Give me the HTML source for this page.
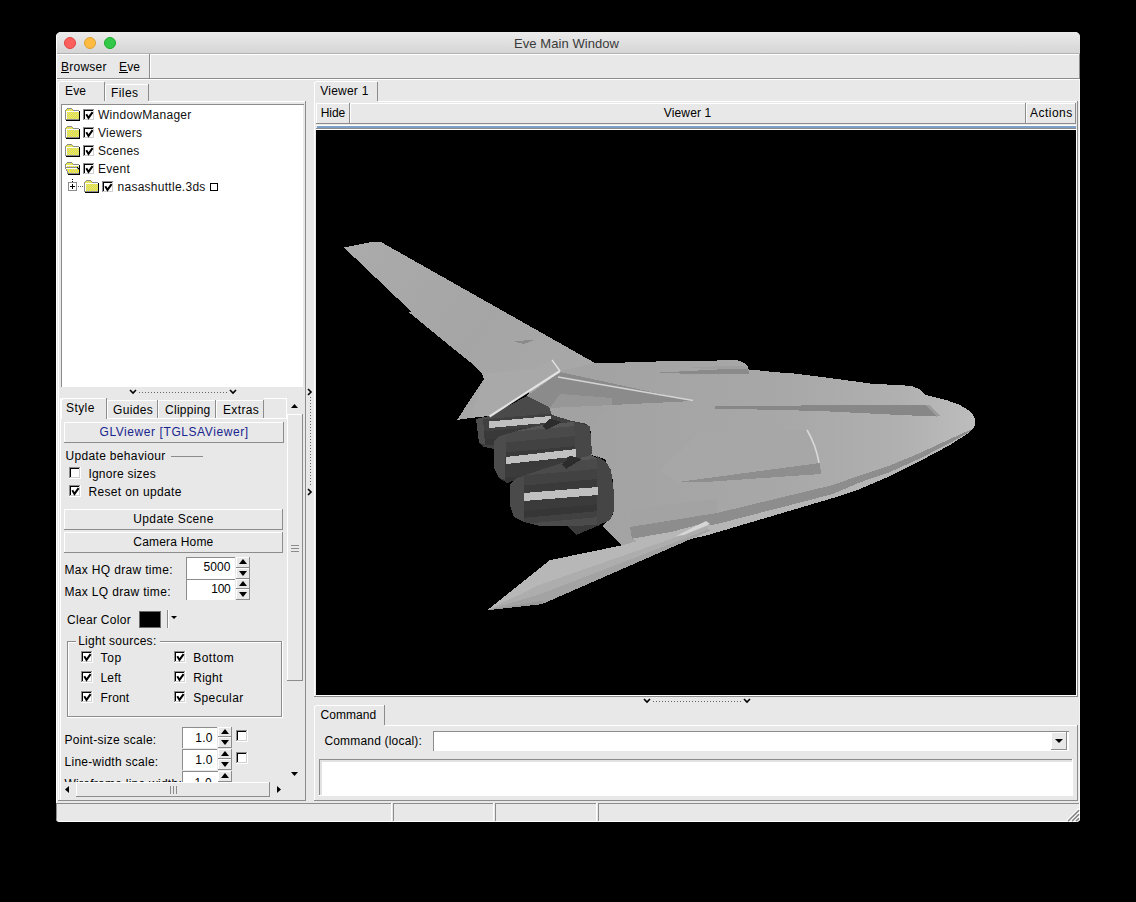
<!DOCTYPE html>
<html><head><meta charset="utf-8"><style>
html,body{margin:0;padding:0;background:#000;width:1136px;height:902px;overflow:hidden}
div,svg{position:absolute;box-sizing:border-box}
.t{font-family:"Liberation Sans",sans-serif;white-space:pre;color:#000}
#win{left:0;top:0;width:1136px;height:902px;clip-path:inset(32px 56px 80px 56px round 5px 5px 4px 4px)}
</style></head><body>
<div id="win"><div style="left:56px;top:32px;width:1024px;height:790px;background:#e8e8e8;"></div><div style="left:56px;top:32px;width:1024px;height:21px;background:linear-gradient(#ebebeb,#d5d5d5);"></div><div style="left:56px;top:53px;width:1024px;height:1px;background:#b2b2b2;"></div><div style="left:64px;top:37px;width:12px;height:12px;border-radius:50%;background:#fc605c;border:0.7px solid #e0443e"></div><div style="left:84px;top:37px;width:12px;height:12px;border-radius:50%;background:#fdbc40;border:0.7px solid #dea034"></div><div style="left:104px;top:37px;width:12px;height:12px;border-radius:50%;background:#34c84a;border:0.7px solid #1aab29"></div><div class="t" style="left:514px;top:37px;font-size:13px;line-height:13px;color:#3a3a3a;letter-spacing:0.067px;">Eve Main Window</div><div style="left:56px;top:54px;width:1024px;height:1px;background:#ffffff;"></div><div style="left:56px;top:78px;width:1024px;height:1px;background:#8c8c8c;"></div><div style="left:149px;top:54px;width:1px;height:24px;background:#8c8c8c;"></div><div style="left:150px;top:54px;width:1px;height:24px;background:#ffffff;"></div><div class="t" style="left:61px;top:61px;font-size:12px;line-height:12px;color:#000;letter-spacing:0.247px;">Browser</div><div style="left:61px;top:72px;width:8px;height:1px;background:#000;"></div><div class="t" style="left:119px;top:61px;font-size:12px;line-height:12px;color:#000;letter-spacing:0.164px;">Eve</div><div style="left:119px;top:72px;width:9px;height:1px;background:#000;"></div><div style="left:56px;top:32px;width:1px;height:790px;background:#ffffff;"></div><div style="left:56px;top:79px;width:1024px;height:1px;background:#ffffff;"></div><div style="left:1079px;top:79px;width:1px;height:743px;background:#f4f4f4;"></div><div style="left:1079px;top:54px;width:1px;height:25px;background:#8c8c8c;"></div><div style="left:58px;top:82px;width:1px;height:719px;background:#ffffff;"></div><div style="left:148px;top:101px;width:158px;height:1px;background:#ffffff;"></div><div style="left:305px;top:101px;width:1px;height:700px;background:#8c8c8c;"></div><div style="left:60px;top:81px;width:44px;height:1px;background:#ffffff;"></div><div style="left:58px;top:83px;width:1px;height:18px;background:#ffffff;"></div><div style="left:59px;top:82px;width:1px;height:1px;background:#ffffff;"></div><div style="left:104px;top:82px;width:1px;height:19px;background:#8c8c8c;"></div><div class="t" style="left:65px;top:85px;font-size:12px;line-height:12px;color:#000;letter-spacing:0.164px;">Eve</div><div style="left:106px;top:84px;width:42px;height:1px;background:#ffffff;"></div><div style="left:105px;top:85px;width:1px;height:16px;background:#ffffff;"></div><div style="left:148px;top:84px;width:1px;height:17px;background:#8c8c8c;"></div><div class="t" style="left:111px;top:87px;font-size:12px;line-height:12px;color:#000;letter-spacing:0.414px;">Files</div><div style="left:62px;top:105px;width:241px;height:282px;background:#fff;"></div><div style="left:61px;top:104px;width:243px;height:1px;background:#8c8c8c;"></div><div style="left:61px;top:104px;width:1px;height:283px;background:#8c8c8c;"></div><svg style="left:65px;top:108px" width="16" height="13" viewBox="0 0 16 13" shape-rendering="crispEdges"><rect x="2" y="0" width="5" height="1" fill="#8c8c8c"/><rect x="1" y="1" width="1" height="1" fill="#8c8c8c"/><rect x="2" y="1" width="1" height="1" fill="#ffff00"/><rect x="3" y="1" width="1" height="1" fill="#c8c8b8"/><rect x="4" y="1" width="1" height="1" fill="#ffff00"/><rect x="5" y="1" width="1" height="1" fill="#c8c8b8"/><rect x="6" y="1" width="1" height="1" fill="#ffff00"/><rect x="7" y="1" width="1" height="1" fill="#8c8c8c"/><rect x="0" y="2" width="1" height="1" fill="#8c8c8c"/><rect x="1" y="2" width="1" height="1" fill="#ffff00"/><rect x="2" y="2" width="1" height="1" fill="#c8c8b8"/><rect x="3" y="2" width="1" height="1" fill="#ffff00"/><rect x="4" y="2" width="1" height="1" fill="#c8c8b8"/><rect x="5" y="2" width="1" height="1" fill="#ffff00"/><rect x="6" y="2" width="1" height="1" fill="#c8c8b8"/><rect x="7" y="2" width="1" height="1" fill="#ffff00"/><rect x="8" y="2" width="6" height="1" fill="#8c8c8c"/><rect x="0" y="3" width="1" height="1" fill="#8c8c8c"/><rect x="1" y="3" width="13" height="1" fill="#ffffff"/><rect x="14" y="3" width="1" height="1" fill="#000000"/><rect x="0" y="4" width="1" height="1" fill="#8c8c8c"/><rect x="1" y="4" width="1" height="1" fill="#ffffff"/><rect x="2" y="4" width="1" height="1" fill="#ffff00"/><rect x="3" y="4" width="1" height="1" fill="#c8c8b8"/><rect x="4" y="4" width="1" height="1" fill="#ffff00"/><rect x="5" y="4" width="1" height="1" fill="#c8c8b8"/><rect x="6" y="4" width="1" height="1" fill="#ffff00"/><rect x="7" y="4" width="1" height="1" fill="#c8c8b8"/><rect x="8" y="4" width="1" height="1" fill="#ffff00"/><rect x="9" y="4" width="1" height="1" fill="#c8c8b8"/><rect x="10" y="4" width="1" height="1" fill="#ffff00"/><rect x="11" y="4" width="1" height="1" fill="#c8c8b8"/><rect x="12" y="4" width="1" height="1" fill="#ffff00"/><rect x="13" y="4" width="1" height="1" fill="#c8c8b8"/><rect x="14" y="4" width="1" height="1" fill="#000000"/><rect x="0" y="5" width="1" height="1" fill="#8c8c8c"/><rect x="1" y="5" width="1" height="1" fill="#ffffff"/><rect x="2" y="5" width="1" height="1" fill="#c8c8b8"/><rect x="3" y="5" width="1" height="1" fill="#ffff00"/><rect x="4" y="5" width="1" height="1" fill="#c8c8b8"/><rect x="5" y="5" width="1" height="1" fill="#ffff00"/><rect x="6" y="5" width="1" height="1" fill="#c8c8b8"/><rect x="7" y="5" width="1" height="1" fill="#ffff00"/><rect x="8" y="5" width="1" height="1" fill="#c8c8b8"/><rect x="9" y="5" width="1" height="1" fill="#ffff00"/><rect x="10" y="5" width="1" height="1" fill="#c8c8b8"/><rect x="11" y="5" width="1" height="1" fill="#ffff00"/><rect x="12" y="5" width="1" height="1" fill="#c8c8b8"/><rect x="13" y="5" width="1" height="1" fill="#ffff00"/><rect x="14" y="5" width="1" height="1" fill="#000000"/><rect x="0" y="6" width="1" height="1" fill="#8c8c8c"/><rect x="1" y="6" width="1" height="1" fill="#ffffff"/><rect x="2" y="6" width="1" height="1" fill="#ffff00"/><rect x="3" y="6" width="1" height="1" fill="#c8c8b8"/><rect x="4" y="6" width="1" height="1" fill="#ffff00"/><rect x="5" y="6" width="1" height="1" fill="#c8c8b8"/><rect x="6" y="6" width="1" height="1" fill="#ffff00"/><rect x="7" y="6" width="1" height="1" fill="#c8c8b8"/><rect x="8" y="6" width="1" height="1" fill="#ffff00"/><rect x="9" y="6" width="1" height="1" fill="#c8c8b8"/><rect x="10" y="6" width="1" height="1" fill="#ffff00"/><rect x="11" y="6" width="1" height="1" fill="#c8c8b8"/><rect x="12" y="6" width="1" height="1" fill="#ffff00"/><rect x="13" y="6" width="1" height="1" fill="#c8c8b8"/><rect x="14" y="6" width="1" height="1" fill="#000000"/><rect x="0" y="7" width="1" height="1" fill="#8c8c8c"/><rect x="1" y="7" width="1" height="1" fill="#ffffff"/><rect x="2" y="7" width="1" height="1" fill="#c8c8b8"/><rect x="3" y="7" width="1" height="1" fill="#ffff00"/><rect x="4" y="7" width="1" height="1" fill="#c8c8b8"/><rect x="5" y="7" width="1" height="1" fill="#ffff00"/><rect x="6" y="7" width="1" height="1" fill="#c8c8b8"/><rect x="7" y="7" width="1" height="1" fill="#ffff00"/><rect x="8" y="7" width="1" height="1" fill="#c8c8b8"/><rect x="9" y="7" width="1" height="1" fill="#ffff00"/><rect x="10" y="7" width="1" height="1" fill="#c8c8b8"/><rect x="11" y="7" width="1" height="1" fill="#ffff00"/><rect x="12" y="7" width="1" height="1" fill="#c8c8b8"/><rect x="13" y="7" width="1" height="1" fill="#ffff00"/><rect x="14" y="7" width="1" height="1" fill="#000000"/><rect x="0" y="8" width="1" height="1" fill="#8c8c8c"/><rect x="1" y="8" width="1" height="1" fill="#ffffff"/><rect x="2" y="8" width="1" height="1" fill="#ffff00"/><rect x="3" y="8" width="1" height="1" fill="#c8c8b8"/><rect x="4" y="8" width="1" height="1" fill="#ffff00"/><rect x="5" y="8" width="1" height="1" fill="#c8c8b8"/><rect x="6" y="8" width="1" height="1" fill="#ffff00"/><rect x="7" y="8" width="1" height="1" fill="#c8c8b8"/><rect x="8" y="8" width="1" height="1" fill="#ffff00"/><rect x="9" y="8" width="1" height="1" fill="#c8c8b8"/><rect x="10" y="8" width="1" height="1" fill="#ffff00"/><rect x="11" y="8" width="1" height="1" fill="#c8c8b8"/><rect x="12" y="8" width="1" height="1" fill="#ffff00"/><rect x="13" y="8" width="1" height="1" fill="#c8c8b8"/><rect x="14" y="8" width="1" height="1" fill="#000000"/><rect x="0" y="9" width="1" height="1" fill="#8c8c8c"/><rect x="1" y="9" width="1" height="1" fill="#ffffff"/><rect x="2" y="9" width="1" height="1" fill="#c8c8b8"/><rect x="3" y="9" width="1" height="1" fill="#ffff00"/><rect x="4" y="9" width="1" height="1" fill="#c8c8b8"/><rect x="5" y="9" width="1" height="1" fill="#ffff00"/><rect x="6" y="9" width="1" height="1" fill="#c8c8b8"/><rect x="7" y="9" width="1" height="1" fill="#ffff00"/><rect x="8" y="9" width="1" height="1" fill="#c8c8b8"/><rect x="9" y="9" width="1" height="1" fill="#ffff00"/><rect x="10" y="9" width="1" height="1" fill="#c8c8b8"/><rect x="11" y="9" width="1" height="1" fill="#ffff00"/><rect x="12" y="9" width="1" height="1" fill="#c8c8b8"/><rect x="13" y="9" width="1" height="1" fill="#ffff00"/><rect x="14" y="9" width="1" height="1" fill="#000000"/><rect x="0" y="10" width="1" height="1" fill="#8c8c8c"/><rect x="1" y="10" width="1" height="1" fill="#ffffff"/><rect x="2" y="10" width="1" height="1" fill="#ffff00"/><rect x="3" y="10" width="1" height="1" fill="#c8c8b8"/><rect x="4" y="10" width="1" height="1" fill="#ffff00"/><rect x="5" y="10" width="1" height="1" fill="#c8c8b8"/><rect x="6" y="10" width="1" height="1" fill="#ffff00"/><rect x="7" y="10" width="1" height="1" fill="#c8c8b8"/><rect x="8" y="10" width="1" height="1" fill="#ffff00"/><rect x="9" y="10" width="1" height="1" fill="#c8c8b8"/><rect x="10" y="10" width="1" height="1" fill="#ffff00"/><rect x="11" y="10" width="1" height="1" fill="#c8c8b8"/><rect x="12" y="10" width="1" height="1" fill="#ffff00"/><rect x="13" y="10" width="1" height="1" fill="#c8c8b8"/><rect x="14" y="10" width="1" height="1" fill="#000000"/><rect x="0" y="11" width="14" height="1" fill="#8c8c8c"/><rect x="14" y="11" width="1" height="1" fill="#000000"/><rect x="1" y="12" width="14" height="1" fill="#000000"/></svg><div style="left:83px;top:109px;width:12px;height:12px;background:#fff;"></div><div style="left:83px;top:109px;width:12px;height:1px;background:#8c8c8c;"></div><div style="left:83px;top:109px;width:1px;height:12px;background:#8c8c8c;"></div><div style="left:84px;top:110px;width:10px;height:1px;background:#000;"></div><div style="left:84px;top:110px;width:1px;height:10px;background:#000;"></div><div style="left:84px;top:119px;width:10px;height:1px;background:#d0d0d0;"></div><div style="left:93px;top:110px;width:1px;height:10px;background:#d0d0d0;"></div><div style="left:83px;top:120px;width:12px;height:1px;background:#ffffff;"></div><div style="left:94px;top:109px;width:1px;height:12px;background:#ffffff;"></div><svg style="left:83px;top:109px" width="12" height="12" viewBox="0 0 12 12"><path d="M3.3 5.3 L5.5 8.9 L9.6 3.2" stroke="#000" stroke-width="2.0" fill="none" stroke-linecap="butt" stroke-linejoin="miter"/></svg><div class="t" style="left:98px;top:109px;font-size:12px;line-height:12px;color:#111;letter-spacing:0.271px;">WindowManager</div><svg style="left:65px;top:126px" width="16" height="13" viewBox="0 0 16 13" shape-rendering="crispEdges"><rect x="2" y="0" width="5" height="1" fill="#8c8c8c"/><rect x="1" y="1" width="1" height="1" fill="#8c8c8c"/><rect x="2" y="1" width="1" height="1" fill="#ffff00"/><rect x="3" y="1" width="1" height="1" fill="#c8c8b8"/><rect x="4" y="1" width="1" height="1" fill="#ffff00"/><rect x="5" y="1" width="1" height="1" fill="#c8c8b8"/><rect x="6" y="1" width="1" height="1" fill="#ffff00"/><rect x="7" y="1" width="1" height="1" fill="#8c8c8c"/><rect x="0" y="2" width="1" height="1" fill="#8c8c8c"/><rect x="1" y="2" width="1" height="1" fill="#ffff00"/><rect x="2" y="2" width="1" height="1" fill="#c8c8b8"/><rect x="3" y="2" width="1" height="1" fill="#ffff00"/><rect x="4" y="2" width="1" height="1" fill="#c8c8b8"/><rect x="5" y="2" width="1" height="1" fill="#ffff00"/><rect x="6" y="2" width="1" height="1" fill="#c8c8b8"/><rect x="7" y="2" width="1" height="1" fill="#ffff00"/><rect x="8" y="2" width="6" height="1" fill="#8c8c8c"/><rect x="0" y="3" width="1" height="1" fill="#8c8c8c"/><rect x="1" y="3" width="13" height="1" fill="#ffffff"/><rect x="14" y="3" width="1" height="1" fill="#000000"/><rect x="0" y="4" width="1" height="1" fill="#8c8c8c"/><rect x="1" y="4" width="1" height="1" fill="#ffffff"/><rect x="2" y="4" width="1" height="1" fill="#ffff00"/><rect x="3" y="4" width="1" height="1" fill="#c8c8b8"/><rect x="4" y="4" width="1" height="1" fill="#ffff00"/><rect x="5" y="4" width="1" height="1" fill="#c8c8b8"/><rect x="6" y="4" width="1" height="1" fill="#ffff00"/><rect x="7" y="4" width="1" height="1" fill="#c8c8b8"/><rect x="8" y="4" width="1" height="1" fill="#ffff00"/><rect x="9" y="4" width="1" height="1" fill="#c8c8b8"/><rect x="10" y="4" width="1" height="1" fill="#ffff00"/><rect x="11" y="4" width="1" height="1" fill="#c8c8b8"/><rect x="12" y="4" width="1" height="1" fill="#ffff00"/><rect x="13" y="4" width="1" height="1" fill="#c8c8b8"/><rect x="14" y="4" width="1" height="1" fill="#000000"/><rect x="0" y="5" width="1" height="1" fill="#8c8c8c"/><rect x="1" y="5" width="1" height="1" fill="#ffffff"/><rect x="2" y="5" width="1" height="1" fill="#c8c8b8"/><rect x="3" y="5" width="1" height="1" fill="#ffff00"/><rect x="4" y="5" width="1" height="1" fill="#c8c8b8"/><rect x="5" y="5" width="1" height="1" fill="#ffff00"/><rect x="6" y="5" width="1" height="1" fill="#c8c8b8"/><rect x="7" y="5" width="1" height="1" fill="#ffff00"/><rect x="8" y="5" width="1" height="1" fill="#c8c8b8"/><rect x="9" y="5" width="1" height="1" fill="#ffff00"/><rect x="10" y="5" width="1" height="1" fill="#c8c8b8"/><rect x="11" y="5" width="1" height="1" fill="#ffff00"/><rect x="12" y="5" width="1" height="1" fill="#c8c8b8"/><rect x="13" y="5" width="1" height="1" fill="#ffff00"/><rect x="14" y="5" width="1" height="1" fill="#000000"/><rect x="0" y="6" width="1" height="1" fill="#8c8c8c"/><rect x="1" y="6" width="1" height="1" fill="#ffffff"/><rect x="2" y="6" width="1" height="1" fill="#ffff00"/><rect x="3" y="6" width="1" height="1" fill="#c8c8b8"/><rect x="4" y="6" width="1" height="1" fill="#ffff00"/><rect x="5" y="6" width="1" height="1" fill="#c8c8b8"/><rect x="6" y="6" width="1" height="1" fill="#ffff00"/><rect x="7" y="6" width="1" height="1" fill="#c8c8b8"/><rect x="8" y="6" width="1" height="1" fill="#ffff00"/><rect x="9" y="6" width="1" height="1" fill="#c8c8b8"/><rect x="10" y="6" width="1" height="1" fill="#ffff00"/><rect x="11" y="6" width="1" height="1" fill="#c8c8b8"/><rect x="12" y="6" width="1" height="1" fill="#ffff00"/><rect x="13" y="6" width="1" height="1" fill="#c8c8b8"/><rect x="14" y="6" width="1" height="1" fill="#000000"/><rect x="0" y="7" width="1" height="1" fill="#8c8c8c"/><rect x="1" y="7" width="1" height="1" fill="#ffffff"/><rect x="2" y="7" width="1" height="1" fill="#c8c8b8"/><rect x="3" y="7" width="1" height="1" fill="#ffff00"/><rect x="4" y="7" width="1" height="1" fill="#c8c8b8"/><rect x="5" y="7" width="1" height="1" fill="#ffff00"/><rect x="6" y="7" width="1" height="1" fill="#c8c8b8"/><rect x="7" y="7" width="1" height="1" fill="#ffff00"/><rect x="8" y="7" width="1" height="1" fill="#c8c8b8"/><rect x="9" y="7" width="1" height="1" fill="#ffff00"/><rect x="10" y="7" width="1" height="1" fill="#c8c8b8"/><rect x="11" y="7" width="1" height="1" fill="#ffff00"/><rect x="12" y="7" width="1" height="1" fill="#c8c8b8"/><rect x="13" y="7" width="1" height="1" fill="#ffff00"/><rect x="14" y="7" width="1" height="1" fill="#000000"/><rect x="0" y="8" width="1" height="1" fill="#8c8c8c"/><rect x="1" y="8" width="1" height="1" fill="#ffffff"/><rect x="2" y="8" width="1" height="1" fill="#ffff00"/><rect x="3" y="8" width="1" height="1" fill="#c8c8b8"/><rect x="4" y="8" width="1" height="1" fill="#ffff00"/><rect x="5" y="8" width="1" height="1" fill="#c8c8b8"/><rect x="6" y="8" width="1" height="1" fill="#ffff00"/><rect x="7" y="8" width="1" height="1" fill="#c8c8b8"/><rect x="8" y="8" width="1" height="1" fill="#ffff00"/><rect x="9" y="8" width="1" height="1" fill="#c8c8b8"/><rect x="10" y="8" width="1" height="1" fill="#ffff00"/><rect x="11" y="8" width="1" height="1" fill="#c8c8b8"/><rect x="12" y="8" width="1" height="1" fill="#ffff00"/><rect x="13" y="8" width="1" height="1" fill="#c8c8b8"/><rect x="14" y="8" width="1" height="1" fill="#000000"/><rect x="0" y="9" width="1" height="1" fill="#8c8c8c"/><rect x="1" y="9" width="1" height="1" fill="#ffffff"/><rect x="2" y="9" width="1" height="1" fill="#c8c8b8"/><rect x="3" y="9" width="1" height="1" fill="#ffff00"/><rect x="4" y="9" width="1" height="1" fill="#c8c8b8"/><rect x="5" y="9" width="1" height="1" fill="#ffff00"/><rect x="6" y="9" width="1" height="1" fill="#c8c8b8"/><rect x="7" y="9" width="1" height="1" fill="#ffff00"/><rect x="8" y="9" width="1" height="1" fill="#c8c8b8"/><rect x="9" y="9" width="1" height="1" fill="#ffff00"/><rect x="10" y="9" width="1" height="1" fill="#c8c8b8"/><rect x="11" y="9" width="1" height="1" fill="#ffff00"/><rect x="12" y="9" width="1" height="1" fill="#c8c8b8"/><rect x="13" y="9" width="1" height="1" fill="#ffff00"/><rect x="14" y="9" width="1" height="1" fill="#000000"/><rect x="0" y="10" width="1" height="1" fill="#8c8c8c"/><rect x="1" y="10" width="1" height="1" fill="#ffffff"/><rect x="2" y="10" width="1" height="1" fill="#ffff00"/><rect x="3" y="10" width="1" height="1" fill="#c8c8b8"/><rect x="4" y="10" width="1" height="1" fill="#ffff00"/><rect x="5" y="10" width="1" height="1" fill="#c8c8b8"/><rect x="6" y="10" width="1" height="1" fill="#ffff00"/><rect x="7" y="10" width="1" height="1" fill="#c8c8b8"/><rect x="8" y="10" width="1" height="1" fill="#ffff00"/><rect x="9" y="10" width="1" height="1" fill="#c8c8b8"/><rect x="10" y="10" width="1" height="1" fill="#ffff00"/><rect x="11" y="10" width="1" height="1" fill="#c8c8b8"/><rect x="12" y="10" width="1" height="1" fill="#ffff00"/><rect x="13" y="10" width="1" height="1" fill="#c8c8b8"/><rect x="14" y="10" width="1" height="1" fill="#000000"/><rect x="0" y="11" width="14" height="1" fill="#8c8c8c"/><rect x="14" y="11" width="1" height="1" fill="#000000"/><rect x="1" y="12" width="14" height="1" fill="#000000"/></svg><div style="left:83px;top:127px;width:12px;height:12px;background:#fff;"></div><div style="left:83px;top:127px;width:12px;height:1px;background:#8c8c8c;"></div><div style="left:83px;top:127px;width:1px;height:12px;background:#8c8c8c;"></div><div style="left:84px;top:128px;width:10px;height:1px;background:#000;"></div><div style="left:84px;top:128px;width:1px;height:10px;background:#000;"></div><div style="left:84px;top:137px;width:10px;height:1px;background:#d0d0d0;"></div><div style="left:93px;top:128px;width:1px;height:10px;background:#d0d0d0;"></div><div style="left:83px;top:138px;width:12px;height:1px;background:#ffffff;"></div><div style="left:94px;top:127px;width:1px;height:12px;background:#ffffff;"></div><svg style="left:83px;top:127px" width="12" height="12" viewBox="0 0 12 12"><path d="M3.3 5.3 L5.5 8.9 L9.6 3.2" stroke="#000" stroke-width="2.0" fill="none" stroke-linecap="butt" stroke-linejoin="miter"/></svg><div class="t" style="left:98px;top:127px;font-size:12px;line-height:12px;color:#111;letter-spacing:0.255px;">Viewers</div><svg style="left:65px;top:144px" width="16" height="13" viewBox="0 0 16 13" shape-rendering="crispEdges"><rect x="2" y="0" width="5" height="1" fill="#8c8c8c"/><rect x="1" y="1" width="1" height="1" fill="#8c8c8c"/><rect x="2" y="1" width="1" height="1" fill="#ffff00"/><rect x="3" y="1" width="1" height="1" fill="#c8c8b8"/><rect x="4" y="1" width="1" height="1" fill="#ffff00"/><rect x="5" y="1" width="1" height="1" fill="#c8c8b8"/><rect x="6" y="1" width="1" height="1" fill="#ffff00"/><rect x="7" y="1" width="1" height="1" fill="#8c8c8c"/><rect x="0" y="2" width="1" height="1" fill="#8c8c8c"/><rect x="1" y="2" width="1" height="1" fill="#ffff00"/><rect x="2" y="2" width="1" height="1" fill="#c8c8b8"/><rect x="3" y="2" width="1" height="1" fill="#ffff00"/><rect x="4" y="2" width="1" height="1" fill="#c8c8b8"/><rect x="5" y="2" width="1" height="1" fill="#ffff00"/><rect x="6" y="2" width="1" height="1" fill="#c8c8b8"/><rect x="7" y="2" width="1" height="1" fill="#ffff00"/><rect x="8" y="2" width="6" height="1" fill="#8c8c8c"/><rect x="0" y="3" width="1" height="1" fill="#8c8c8c"/><rect x="1" y="3" width="13" height="1" fill="#ffffff"/><rect x="14" y="3" width="1" height="1" fill="#000000"/><rect x="0" y="4" width="1" height="1" fill="#8c8c8c"/><rect x="1" y="4" width="1" height="1" fill="#ffffff"/><rect x="2" y="4" width="1" height="1" fill="#ffff00"/><rect x="3" y="4" width="1" height="1" fill="#c8c8b8"/><rect x="4" y="4" width="1" height="1" fill="#ffff00"/><rect x="5" y="4" width="1" height="1" fill="#c8c8b8"/><rect x="6" y="4" width="1" height="1" fill="#ffff00"/><rect x="7" y="4" width="1" height="1" fill="#c8c8b8"/><rect x="8" y="4" width="1" height="1" fill="#ffff00"/><rect x="9" y="4" width="1" height="1" fill="#c8c8b8"/><rect x="10" y="4" width="1" height="1" fill="#ffff00"/><rect x="11" y="4" width="1" height="1" fill="#c8c8b8"/><rect x="12" y="4" width="1" height="1" fill="#ffff00"/><rect x="13" y="4" width="1" height="1" fill="#c8c8b8"/><rect x="14" y="4" width="1" height="1" fill="#000000"/><rect x="0" y="5" width="1" height="1" fill="#8c8c8c"/><rect x="1" y="5" width="1" height="1" fill="#ffffff"/><rect x="2" y="5" width="1" height="1" fill="#c8c8b8"/><rect x="3" y="5" width="1" height="1" fill="#ffff00"/><rect x="4" y="5" width="1" height="1" fill="#c8c8b8"/><rect x="5" y="5" width="1" height="1" fill="#ffff00"/><rect x="6" y="5" width="1" height="1" fill="#c8c8b8"/><rect x="7" y="5" width="1" height="1" fill="#ffff00"/><rect x="8" y="5" width="1" height="1" fill="#c8c8b8"/><rect x="9" y="5" width="1" height="1" fill="#ffff00"/><rect x="10" y="5" width="1" height="1" fill="#c8c8b8"/><rect x="11" y="5" width="1" height="1" fill="#ffff00"/><rect x="12" y="5" width="1" height="1" fill="#c8c8b8"/><rect x="13" y="5" width="1" height="1" fill="#ffff00"/><rect x="14" y="5" width="1" height="1" fill="#000000"/><rect x="0" y="6" width="1" height="1" fill="#8c8c8c"/><rect x="1" y="6" width="1" height="1" fill="#ffffff"/><rect x="2" y="6" width="1" height="1" fill="#ffff00"/><rect x="3" y="6" width="1" height="1" fill="#c8c8b8"/><rect x="4" y="6" width="1" height="1" fill="#ffff00"/><rect x="5" y="6" width="1" height="1" fill="#c8c8b8"/><rect x="6" y="6" width="1" height="1" fill="#ffff00"/><rect x="7" y="6" width="1" height="1" fill="#c8c8b8"/><rect x="8" y="6" width="1" height="1" fill="#ffff00"/><rect x="9" y="6" width="1" height="1" fill="#c8c8b8"/><rect x="10" y="6" width="1" height="1" fill="#ffff00"/><rect x="11" y="6" width="1" height="1" fill="#c8c8b8"/><rect x="12" y="6" width="1" height="1" fill="#ffff00"/><rect x="13" y="6" width="1" height="1" fill="#c8c8b8"/><rect x="14" y="6" width="1" height="1" fill="#000000"/><rect x="0" y="7" width="1" height="1" fill="#8c8c8c"/><rect x="1" y="7" width="1" height="1" fill="#ffffff"/><rect x="2" y="7" width="1" height="1" fill="#c8c8b8"/><rect x="3" y="7" width="1" height="1" fill="#ffff00"/><rect x="4" y="7" width="1" height="1" fill="#c8c8b8"/><rect x="5" y="7" width="1" height="1" fill="#ffff00"/><rect x="6" y="7" width="1" height="1" fill="#c8c8b8"/><rect x="7" y="7" width="1" height="1" fill="#ffff00"/><rect x="8" y="7" width="1" height="1" fill="#c8c8b8"/><rect x="9" y="7" width="1" height="1" fill="#ffff00"/><rect x="10" y="7" width="1" height="1" fill="#c8c8b8"/><rect x="11" y="7" width="1" height="1" fill="#ffff00"/><rect x="12" y="7" width="1" height="1" fill="#c8c8b8"/><rect x="13" y="7" width="1" height="1" fill="#ffff00"/><rect x="14" y="7" width="1" height="1" fill="#000000"/><rect x="0" y="8" width="1" height="1" fill="#8c8c8c"/><rect x="1" y="8" width="1" height="1" fill="#ffffff"/><rect x="2" y="8" width="1" height="1" fill="#ffff00"/><rect x="3" y="8" width="1" height="1" fill="#c8c8b8"/><rect x="4" y="8" width="1" height="1" fill="#ffff00"/><rect x="5" y="8" width="1" height="1" fill="#c8c8b8"/><rect x="6" y="8" width="1" height="1" fill="#ffff00"/><rect x="7" y="8" width="1" height="1" fill="#c8c8b8"/><rect x="8" y="8" width="1" height="1" fill="#ffff00"/><rect x="9" y="8" width="1" height="1" fill="#c8c8b8"/><rect x="10" y="8" width="1" height="1" fill="#ffff00"/><rect x="11" y="8" width="1" height="1" fill="#c8c8b8"/><rect x="12" y="8" width="1" height="1" fill="#ffff00"/><rect x="13" y="8" width="1" height="1" fill="#c8c8b8"/><rect x="14" y="8" width="1" height="1" fill="#000000"/><rect x="0" y="9" width="1" height="1" fill="#8c8c8c"/><rect x="1" y="9" width="1" height="1" fill="#ffffff"/><rect x="2" y="9" width="1" height="1" fill="#c8c8b8"/><rect x="3" y="9" width="1" height="1" fill="#ffff00"/><rect x="4" y="9" width="1" height="1" fill="#c8c8b8"/><rect x="5" y="9" width="1" height="1" fill="#ffff00"/><rect x="6" y="9" width="1" height="1" fill="#c8c8b8"/><rect x="7" y="9" width="1" height="1" fill="#ffff00"/><rect x="8" y="9" width="1" height="1" fill="#c8c8b8"/><rect x="9" y="9" width="1" height="1" fill="#ffff00"/><rect x="10" y="9" width="1" height="1" fill="#c8c8b8"/><rect x="11" y="9" width="1" height="1" fill="#ffff00"/><rect x="12" y="9" width="1" height="1" fill="#c8c8b8"/><rect x="13" y="9" width="1" height="1" fill="#ffff00"/><rect x="14" y="9" width="1" height="1" fill="#000000"/><rect x="0" y="10" width="1" height="1" fill="#8c8c8c"/><rect x="1" y="10" width="1" height="1" fill="#ffffff"/><rect x="2" y="10" width="1" height="1" fill="#ffff00"/><rect x="3" y="10" width="1" height="1" fill="#c8c8b8"/><rect x="4" y="10" width="1" height="1" fill="#ffff00"/><rect x="5" y="10" width="1" height="1" fill="#c8c8b8"/><rect x="6" y="10" width="1" height="1" fill="#ffff00"/><rect x="7" y="10" width="1" height="1" fill="#c8c8b8"/><rect x="8" y="10" width="1" height="1" fill="#ffff00"/><rect x="9" y="10" width="1" height="1" fill="#c8c8b8"/><rect x="10" y="10" width="1" height="1" fill="#ffff00"/><rect x="11" y="10" width="1" height="1" fill="#c8c8b8"/><rect x="12" y="10" width="1" height="1" fill="#ffff00"/><rect x="13" y="10" width="1" height="1" fill="#c8c8b8"/><rect x="14" y="10" width="1" height="1" fill="#000000"/><rect x="0" y="11" width="14" height="1" fill="#8c8c8c"/><rect x="14" y="11" width="1" height="1" fill="#000000"/><rect x="1" y="12" width="14" height="1" fill="#000000"/></svg><div style="left:83px;top:145px;width:12px;height:12px;background:#fff;"></div><div style="left:83px;top:145px;width:12px;height:1px;background:#8c8c8c;"></div><div style="left:83px;top:145px;width:1px;height:12px;background:#8c8c8c;"></div><div style="left:84px;top:146px;width:10px;height:1px;background:#000;"></div><div style="left:84px;top:146px;width:1px;height:10px;background:#000;"></div><div style="left:84px;top:155px;width:10px;height:1px;background:#d0d0d0;"></div><div style="left:93px;top:146px;width:1px;height:10px;background:#d0d0d0;"></div><div style="left:83px;top:156px;width:12px;height:1px;background:#ffffff;"></div><div style="left:94px;top:145px;width:1px;height:12px;background:#ffffff;"></div><svg style="left:83px;top:145px" width="12" height="12" viewBox="0 0 12 12"><path d="M3.3 5.3 L5.5 8.9 L9.6 3.2" stroke="#000" stroke-width="2.0" fill="none" stroke-linecap="butt" stroke-linejoin="miter"/></svg><div class="t" style="left:98px;top:145px;font-size:12px;line-height:12px;color:#111;letter-spacing:0.257px;">Scenes</div><svg style="left:65px;top:162px" width="16" height="13" viewBox="0 0 16 13" shape-rendering="crispEdges"><rect x="2" y="0" width="5" height="1" fill="#8c8c8c"/><rect x="1" y="1" width="1" height="1" fill="#8c8c8c"/><rect x="2" y="1" width="1" height="1" fill="#ffff00"/><rect x="3" y="1" width="1" height="1" fill="#c8c8b8"/><rect x="4" y="1" width="1" height="1" fill="#ffff00"/><rect x="5" y="1" width="1" height="1" fill="#c8c8b8"/><rect x="6" y="1" width="1" height="1" fill="#ffff00"/><rect x="7" y="1" width="1" height="1" fill="#8c8c8c"/><rect x="0" y="2" width="1" height="1" fill="#8c8c8c"/><rect x="1" y="2" width="1" height="1" fill="#ffff00"/><rect x="2" y="2" width="1" height="1" fill="#c8c8b8"/><rect x="3" y="2" width="1" height="1" fill="#ffff00"/><rect x="4" y="2" width="1" height="1" fill="#c8c8b8"/><rect x="5" y="2" width="1" height="1" fill="#ffff00"/><rect x="6" y="2" width="1" height="1" fill="#c8c8b8"/><rect x="7" y="2" width="1" height="1" fill="#ffff00"/><rect x="8" y="2" width="6" height="1" fill="#8c8c8c"/><rect x="0" y="3" width="1" height="1" fill="#8c8c8c"/><rect x="1" y="3" width="13" height="1" fill="#ffffff"/><rect x="14" y="3" width="1" height="1" fill="#000000"/><rect x="0" y="4" width="1" height="1" fill="#8c8c8c"/><rect x="1" y="4" width="1" height="1" fill="#ffffff"/><rect x="2" y="4" width="1" height="1" fill="#ffff00"/><rect x="3" y="4" width="1" height="1" fill="#c8c8b8"/><rect x="4" y="4" width="1" height="1" fill="#ffff00"/><rect x="5" y="4" width="1" height="1" fill="#c8c8b8"/><rect x="6" y="4" width="1" height="1" fill="#ffff00"/><rect x="7" y="4" width="1" height="1" fill="#c8c8b8"/><rect x="8" y="4" width="1" height="1" fill="#ffff00"/><rect x="9" y="4" width="1" height="1" fill="#c8c8b8"/><rect x="10" y="4" width="1" height="1" fill="#ffff00"/><rect x="11" y="4" width="1" height="1" fill="#c8c8b8"/><rect x="12" y="4" width="1" height="1" fill="#ffff00"/><rect x="13" y="4" width="1" height="1" fill="#c8c8b8"/><rect x="14" y="4" width="1" height="1" fill="#000000"/><rect x="0" y="5" width="12" height="1" fill="#8c8c8c"/><rect x="12" y="5" width="1" height="1" fill="#000000"/><rect x="13" y="5" width="1" height="1" fill="#c8c8b8"/><rect x="14" y="5" width="1" height="1" fill="#000000"/><rect x="0" y="6" width="1" height="1" fill="#8c8c8c"/><rect x="1" y="6" width="11" height="1" fill="#ffffff"/><rect x="12" y="6" width="1" height="1" fill="#8c8c8c"/><rect x="13" y="6" width="2" height="1" fill="#000000"/><rect x="1" y="7" width="1" height="1" fill="#8c8c8c"/><rect x="2" y="7" width="1" height="1" fill="#ffff00"/><rect x="3" y="7" width="1" height="1" fill="#c8c8b8"/><rect x="4" y="7" width="1" height="1" fill="#ffff00"/><rect x="5" y="7" width="1" height="1" fill="#c8c8b8"/><rect x="6" y="7" width="1" height="1" fill="#ffff00"/><rect x="7" y="7" width="1" height="1" fill="#c8c8b8"/><rect x="8" y="7" width="1" height="1" fill="#ffff00"/><rect x="9" y="7" width="1" height="1" fill="#c8c8b8"/><rect x="10" y="7" width="1" height="1" fill="#ffff00"/><rect x="11" y="7" width="1" height="1" fill="#c8c8b8"/><rect x="12" y="7" width="1" height="1" fill="#ffff00"/><rect x="13" y="7" width="1" height="1" fill="#8c8c8c"/><rect x="14" y="7" width="1" height="1" fill="#000000"/><rect x="1" y="8" width="1" height="1" fill="#8c8c8c"/><rect x="2" y="8" width="1" height="1" fill="#c8c8b8"/><rect x="3" y="8" width="1" height="1" fill="#ffff00"/><rect x="4" y="8" width="1" height="1" fill="#c8c8b8"/><rect x="5" y="8" width="1" height="1" fill="#ffff00"/><rect x="6" y="8" width="1" height="1" fill="#c8c8b8"/><rect x="7" y="8" width="1" height="1" fill="#ffff00"/><rect x="8" y="8" width="1" height="1" fill="#c8c8b8"/><rect x="9" y="8" width="1" height="1" fill="#ffff00"/><rect x="10" y="8" width="1" height="1" fill="#c8c8b8"/><rect x="11" y="8" width="1" height="1" fill="#ffff00"/><rect x="12" y="8" width="1" height="1" fill="#c8c8b8"/><rect x="13" y="8" width="1" height="1" fill="#ffff00"/><rect x="14" y="8" width="1" height="1" fill="#000000"/><rect x="2" y="9" width="1" height="1" fill="#8c8c8c"/><rect x="3" y="9" width="1" height="1" fill="#ffff00"/><rect x="4" y="9" width="1" height="1" fill="#c8c8b8"/><rect x="5" y="9" width="1" height="1" fill="#ffff00"/><rect x="6" y="9" width="1" height="1" fill="#c8c8b8"/><rect x="7" y="9" width="1" height="1" fill="#ffff00"/><rect x="8" y="9" width="1" height="1" fill="#c8c8b8"/><rect x="9" y="9" width="1" height="1" fill="#ffff00"/><rect x="10" y="9" width="1" height="1" fill="#c8c8b8"/><rect x="11" y="9" width="1" height="1" fill="#ffff00"/><rect x="12" y="9" width="1" height="1" fill="#c8c8b8"/><rect x="13" y="9" width="1" height="1" fill="#ffff00"/><rect x="14" y="9" width="1" height="1" fill="#000000"/><rect x="2" y="10" width="1" height="1" fill="#8c8c8c"/><rect x="3" y="10" width="1" height="1" fill="#c8c8b8"/><rect x="4" y="10" width="1" height="1" fill="#ffff00"/><rect x="5" y="10" width="1" height="1" fill="#c8c8b8"/><rect x="6" y="10" width="1" height="1" fill="#ffff00"/><rect x="7" y="10" width="1" height="1" fill="#c8c8b8"/><rect x="8" y="10" width="1" height="1" fill="#ffff00"/><rect x="9" y="10" width="1" height="1" fill="#c8c8b8"/><rect x="10" y="10" width="1" height="1" fill="#ffff00"/><rect x="11" y="10" width="1" height="1" fill="#c8c8b8"/><rect x="12" y="10" width="1" height="1" fill="#ffff00"/><rect x="13" y="10" width="1" height="1" fill="#c8c8b8"/><rect x="14" y="10" width="1" height="1" fill="#000000"/><rect x="2" y="11" width="12" height="1" fill="#8c8c8c"/><rect x="14" y="11" width="1" height="1" fill="#000000"/><rect x="3" y="12" width="12" height="1" fill="#000000"/></svg><div style="left:83px;top:163px;width:12px;height:12px;background:#fff;"></div><div style="left:83px;top:163px;width:12px;height:1px;background:#8c8c8c;"></div><div style="left:83px;top:163px;width:1px;height:12px;background:#8c8c8c;"></div><div style="left:84px;top:164px;width:10px;height:1px;background:#000;"></div><div style="left:84px;top:164px;width:1px;height:10px;background:#000;"></div><div style="left:84px;top:173px;width:10px;height:1px;background:#d0d0d0;"></div><div style="left:93px;top:164px;width:1px;height:10px;background:#d0d0d0;"></div><div style="left:83px;top:174px;width:12px;height:1px;background:#ffffff;"></div><div style="left:94px;top:163px;width:1px;height:12px;background:#ffffff;"></div><svg style="left:83px;top:163px" width="12" height="12" viewBox="0 0 12 12"><path d="M3.3 5.3 L5.5 8.9 L9.6 3.2" stroke="#000" stroke-width="2.0" fill="none" stroke-linecap="butt" stroke-linejoin="miter"/></svg><div class="t" style="left:98px;top:163px;font-size:12px;line-height:12px;color:#111;letter-spacing:0.257px;">Event</div><svg style="left:68px;top:179px" width="9" height="12" viewBox="0 0 9 12" shape-rendering="crispEdges"><rect x="4" y="0" width="1" height="1" fill="#000"/><rect x="4" y="2" width="1" height="1" fill="#000"/><rect x="0" y="3" width="9" height="1" fill="#8c8c8c"/><rect x="0" y="4" width="1" height="1" fill="#8c8c8c"/><rect x="1" y="4" width="7" height="1" fill="#ffffff"/><rect x="8" y="4" width="1" height="1" fill="#8c8c8c"/><rect x="0" y="5" width="1" height="1" fill="#8c8c8c"/><rect x="1" y="5" width="3" height="1" fill="#ffffff"/><rect x="4" y="5" width="1" height="1" fill="#000"/><rect x="5" y="5" width="3" height="1" fill="#ffffff"/><rect x="8" y="5" width="1" height="1" fill="#8c8c8c"/><rect x="0" y="6" width="1" height="1" fill="#8c8c8c"/><rect x="1" y="6" width="3" height="1" fill="#ffffff"/><rect x="4" y="6" width="1" height="1" fill="#000"/><rect x="5" y="6" width="3" height="1" fill="#ffffff"/><rect x="8" y="6" width="1" height="1" fill="#8c8c8c"/><rect x="0" y="7" width="1" height="1" fill="#8c8c8c"/><rect x="1" y="7" width="1" height="1" fill="#ffffff"/><rect x="2" y="7" width="5" height="1" fill="#000"/><rect x="7" y="7" width="1" height="1" fill="#ffffff"/><rect x="8" y="7" width="1" height="1" fill="#8c8c8c"/><rect x="0" y="8" width="1" height="1" fill="#8c8c8c"/><rect x="1" y="8" width="3" height="1" fill="#ffffff"/><rect x="4" y="8" width="1" height="1" fill="#000"/><rect x="5" y="8" width="3" height="1" fill="#ffffff"/><rect x="8" y="8" width="1" height="1" fill="#8c8c8c"/><rect x="0" y="9" width="1" height="1" fill="#8c8c8c"/><rect x="1" y="9" width="3" height="1" fill="#ffffff"/><rect x="4" y="9" width="1" height="1" fill="#000"/><rect x="5" y="9" width="3" height="1" fill="#ffffff"/><rect x="8" y="9" width="1" height="1" fill="#8c8c8c"/><rect x="0" y="10" width="1" height="1" fill="#8c8c8c"/><rect x="1" y="10" width="7" height="1" fill="#ffffff"/><rect x="8" y="10" width="1" height="1" fill="#8c8c8c"/><rect x="0" y="11" width="9" height="1" fill="#8c8c8c"/></svg><div style="left:78px;top:186px;width:1px;height:1px;background:#666;"></div><div style="left:80px;top:186px;width:1px;height:1px;background:#666;"></div><div style="left:82px;top:186px;width:1px;height:1px;background:#666;"></div><svg style="left:84px;top:180px" width="16" height="13" viewBox="0 0 16 13" shape-rendering="crispEdges"><rect x="2" y="0" width="5" height="1" fill="#8c8c8c"/><rect x="1" y="1" width="1" height="1" fill="#8c8c8c"/><rect x="2" y="1" width="1" height="1" fill="#ffff00"/><rect x="3" y="1" width="1" height="1" fill="#c8c8b8"/><rect x="4" y="1" width="1" height="1" fill="#ffff00"/><rect x="5" y="1" width="1" height="1" fill="#c8c8b8"/><rect x="6" y="1" width="1" height="1" fill="#ffff00"/><rect x="7" y="1" width="1" height="1" fill="#8c8c8c"/><rect x="0" y="2" width="1" height="1" fill="#8c8c8c"/><rect x="1" y="2" width="1" height="1" fill="#ffff00"/><rect x="2" y="2" width="1" height="1" fill="#c8c8b8"/><rect x="3" y="2" width="1" height="1" fill="#ffff00"/><rect x="4" y="2" width="1" height="1" fill="#c8c8b8"/><rect x="5" y="2" width="1" height="1" fill="#ffff00"/><rect x="6" y="2" width="1" height="1" fill="#c8c8b8"/><rect x="7" y="2" width="1" height="1" fill="#ffff00"/><rect x="8" y="2" width="6" height="1" fill="#8c8c8c"/><rect x="0" y="3" width="1" height="1" fill="#8c8c8c"/><rect x="1" y="3" width="13" height="1" fill="#ffffff"/><rect x="14" y="3" width="1" height="1" fill="#000000"/><rect x="0" y="4" width="1" height="1" fill="#8c8c8c"/><rect x="1" y="4" width="1" height="1" fill="#ffffff"/><rect x="2" y="4" width="1" height="1" fill="#ffff00"/><rect x="3" y="4" width="1" height="1" fill="#c8c8b8"/><rect x="4" y="4" width="1" height="1" fill="#ffff00"/><rect x="5" y="4" width="1" height="1" fill="#c8c8b8"/><rect x="6" y="4" width="1" height="1" fill="#ffff00"/><rect x="7" y="4" width="1" height="1" fill="#c8c8b8"/><rect x="8" y="4" width="1" height="1" fill="#ffff00"/><rect x="9" y="4" width="1" height="1" fill="#c8c8b8"/><rect x="10" y="4" width="1" height="1" fill="#ffff00"/><rect x="11" y="4" width="1" height="1" fill="#c8c8b8"/><rect x="12" y="4" width="1" height="1" fill="#ffff00"/><rect x="13" y="4" width="1" height="1" fill="#c8c8b8"/><rect x="14" y="4" width="1" height="1" fill="#000000"/><rect x="0" y="5" width="1" height="1" fill="#8c8c8c"/><rect x="1" y="5" width="1" height="1" fill="#ffffff"/><rect x="2" y="5" width="1" height="1" fill="#c8c8b8"/><rect x="3" y="5" width="1" height="1" fill="#ffff00"/><rect x="4" y="5" width="1" height="1" fill="#c8c8b8"/><rect x="5" y="5" width="1" height="1" fill="#ffff00"/><rect x="6" y="5" width="1" height="1" fill="#c8c8b8"/><rect x="7" y="5" width="1" height="1" fill="#ffff00"/><rect x="8" y="5" width="1" height="1" fill="#c8c8b8"/><rect x="9" y="5" width="1" height="1" fill="#ffff00"/><rect x="10" y="5" width="1" height="1" fill="#c8c8b8"/><rect x="11" y="5" width="1" height="1" fill="#ffff00"/><rect x="12" y="5" width="1" height="1" fill="#c8c8b8"/><rect x="13" y="5" width="1" height="1" fill="#ffff00"/><rect x="14" y="5" width="1" height="1" fill="#000000"/><rect x="0" y="6" width="1" height="1" fill="#8c8c8c"/><rect x="1" y="6" width="1" height="1" fill="#ffffff"/><rect x="2" y="6" width="1" height="1" fill="#ffff00"/><rect x="3" y="6" width="1" height="1" fill="#c8c8b8"/><rect x="4" y="6" width="1" height="1" fill="#ffff00"/><rect x="5" y="6" width="1" height="1" fill="#c8c8b8"/><rect x="6" y="6" width="1" height="1" fill="#ffff00"/><rect x="7" y="6" width="1" height="1" fill="#c8c8b8"/><rect x="8" y="6" width="1" height="1" fill="#ffff00"/><rect x="9" y="6" width="1" height="1" fill="#c8c8b8"/><rect x="10" y="6" width="1" height="1" fill="#ffff00"/><rect x="11" y="6" width="1" height="1" fill="#c8c8b8"/><rect x="12" y="6" width="1" height="1" fill="#ffff00"/><rect x="13" y="6" width="1" height="1" fill="#c8c8b8"/><rect x="14" y="6" width="1" height="1" fill="#000000"/><rect x="0" y="7" width="1" height="1" fill="#8c8c8c"/><rect x="1" y="7" width="1" height="1" fill="#ffffff"/><rect x="2" y="7" width="1" height="1" fill="#c8c8b8"/><rect x="3" y="7" width="1" height="1" fill="#ffff00"/><rect x="4" y="7" width="1" height="1" fill="#c8c8b8"/><rect x="5" y="7" width="1" height="1" fill="#ffff00"/><rect x="6" y="7" width="1" height="1" fill="#c8c8b8"/><rect x="7" y="7" width="1" height="1" fill="#ffff00"/><rect x="8" y="7" width="1" height="1" fill="#c8c8b8"/><rect x="9" y="7" width="1" height="1" fill="#ffff00"/><rect x="10" y="7" width="1" height="1" fill="#c8c8b8"/><rect x="11" y="7" width="1" height="1" fill="#ffff00"/><rect x="12" y="7" width="1" height="1" fill="#c8c8b8"/><rect x="13" y="7" width="1" height="1" fill="#ffff00"/><rect x="14" y="7" width="1" height="1" fill="#000000"/><rect x="0" y="8" width="1" height="1" fill="#8c8c8c"/><rect x="1" y="8" width="1" height="1" fill="#ffffff"/><rect x="2" y="8" width="1" height="1" fill="#ffff00"/><rect x="3" y="8" width="1" height="1" fill="#c8c8b8"/><rect x="4" y="8" width="1" height="1" fill="#ffff00"/><rect x="5" y="8" width="1" height="1" fill="#c8c8b8"/><rect x="6" y="8" width="1" height="1" fill="#ffff00"/><rect x="7" y="8" width="1" height="1" fill="#c8c8b8"/><rect x="8" y="8" width="1" height="1" fill="#ffff00"/><rect x="9" y="8" width="1" height="1" fill="#c8c8b8"/><rect x="10" y="8" width="1" height="1" fill="#ffff00"/><rect x="11" y="8" width="1" height="1" fill="#c8c8b8"/><rect x="12" y="8" width="1" height="1" fill="#ffff00"/><rect x="13" y="8" width="1" height="1" fill="#c8c8b8"/><rect x="14" y="8" width="1" height="1" fill="#000000"/><rect x="0" y="9" width="1" height="1" fill="#8c8c8c"/><rect x="1" y="9" width="1" height="1" fill="#ffffff"/><rect x="2" y="9" width="1" height="1" fill="#c8c8b8"/><rect x="3" y="9" width="1" height="1" fill="#ffff00"/><rect x="4" y="9" width="1" height="1" fill="#c8c8b8"/><rect x="5" y="9" width="1" height="1" fill="#ffff00"/><rect x="6" y="9" width="1" height="1" fill="#c8c8b8"/><rect x="7" y="9" width="1" height="1" fill="#ffff00"/><rect x="8" y="9" width="1" height="1" fill="#c8c8b8"/><rect x="9" y="9" width="1" height="1" fill="#ffff00"/><rect x="10" y="9" width="1" height="1" fill="#c8c8b8"/><rect x="11" y="9" width="1" height="1" fill="#ffff00"/><rect x="12" y="9" width="1" height="1" fill="#c8c8b8"/><rect x="13" y="9" width="1" height="1" fill="#ffff00"/><rect x="14" y="9" width="1" height="1" fill="#000000"/><rect x="0" y="10" width="1" height="1" fill="#8c8c8c"/><rect x="1" y="10" width="1" height="1" fill="#ffffff"/><rect x="2" y="10" width="1" height="1" fill="#ffff00"/><rect x="3" y="10" width="1" height="1" fill="#c8c8b8"/><rect x="4" y="10" width="1" height="1" fill="#ffff00"/><rect x="5" y="10" width="1" height="1" fill="#c8c8b8"/><rect x="6" y="10" width="1" height="1" fill="#ffff00"/><rect x="7" y="10" width="1" height="1" fill="#c8c8b8"/><rect x="8" y="10" width="1" height="1" fill="#ffff00"/><rect x="9" y="10" width="1" height="1" fill="#c8c8b8"/><rect x="10" y="10" width="1" height="1" fill="#ffff00"/><rect x="11" y="10" width="1" height="1" fill="#c8c8b8"/><rect x="12" y="10" width="1" height="1" fill="#ffff00"/><rect x="13" y="10" width="1" height="1" fill="#c8c8b8"/><rect x="14" y="10" width="1" height="1" fill="#000000"/><rect x="0" y="11" width="14" height="1" fill="#8c8c8c"/><rect x="14" y="11" width="1" height="1" fill="#000000"/><rect x="1" y="12" width="14" height="1" fill="#000000"/></svg><div style="left:102px;top:181px;width:12px;height:12px;background:#fff;"></div><div style="left:102px;top:181px;width:12px;height:1px;background:#8c8c8c;"></div><div style="left:102px;top:181px;width:1px;height:12px;background:#8c8c8c;"></div><div style="left:103px;top:182px;width:10px;height:1px;background:#000;"></div><div style="left:103px;top:182px;width:1px;height:10px;background:#000;"></div><div style="left:103px;top:191px;width:10px;height:1px;background:#d0d0d0;"></div><div style="left:112px;top:182px;width:1px;height:10px;background:#d0d0d0;"></div><div style="left:102px;top:192px;width:12px;height:1px;background:#ffffff;"></div><div style="left:113px;top:181px;width:1px;height:12px;background:#ffffff;"></div><svg style="left:102px;top:181px" width="12" height="12" viewBox="0 0 12 12"><path d="M3.3 5.3 L5.5 8.9 L9.6 3.2" stroke="#000" stroke-width="2.0" fill="none" stroke-linecap="butt" stroke-linejoin="miter"/></svg><div class="t" style="left:117.5px;top:181px;font-size:12px;line-height:12px;color:#111;letter-spacing:0.269px;">nasashuttle.3ds</div><div style="left:210px;top:183px;width:8px;height:8px;background:#fff;border:1px solid #000"></div><svg style="left:129px;top:389px" width="8" height="6" viewBox="0 0 8 6"><path d="M1 1 L4 4 L7 1" stroke="#000" stroke-width="1.6" fill="none"/></svg><svg style="left:229px;top:389px" width="8" height="6" viewBox="0 0 8 6"><path d="M1 1 L4 4 L7 1" stroke="#000" stroke-width="1.6" fill="none"/></svg><div style="left:139px;top:392px;width:1px;height:1px;background:#666;"></div><div style="left:142px;top:392px;width:1px;height:1px;background:#666;"></div><div style="left:145px;top:392px;width:1px;height:1px;background:#666;"></div><div style="left:148px;top:392px;width:1px;height:1px;background:#666;"></div><div style="left:151px;top:392px;width:1px;height:1px;background:#666;"></div><div style="left:154px;top:392px;width:1px;height:1px;background:#666;"></div><div style="left:157px;top:392px;width:1px;height:1px;background:#666;"></div><div style="left:160px;top:392px;width:1px;height:1px;background:#666;"></div><div style="left:163px;top:392px;width:1px;height:1px;background:#666;"></div><div style="left:166px;top:392px;width:1px;height:1px;background:#666;"></div><div style="left:169px;top:392px;width:1px;height:1px;background:#666;"></div><div style="left:172px;top:392px;width:1px;height:1px;background:#666;"></div><div style="left:175px;top:392px;width:1px;height:1px;background:#666;"></div><div style="left:178px;top:392px;width:1px;height:1px;background:#666;"></div><div style="left:181px;top:392px;width:1px;height:1px;background:#666;"></div><div style="left:184px;top:392px;width:1px;height:1px;background:#666;"></div><div style="left:187px;top:392px;width:1px;height:1px;background:#666;"></div><div style="left:190px;top:392px;width:1px;height:1px;background:#666;"></div><div style="left:193px;top:392px;width:1px;height:1px;background:#666;"></div><div style="left:196px;top:392px;width:1px;height:1px;background:#666;"></div><div style="left:199px;top:392px;width:1px;height:1px;background:#666;"></div><div style="left:202px;top:392px;width:1px;height:1px;background:#666;"></div><div style="left:205px;top:392px;width:1px;height:1px;background:#666;"></div><div style="left:208px;top:392px;width:1px;height:1px;background:#666;"></div><div style="left:211px;top:392px;width:1px;height:1px;background:#666;"></div><div style="left:214px;top:392px;width:1px;height:1px;background:#666;"></div><div style="left:217px;top:392px;width:1px;height:1px;background:#666;"></div><div style="left:220px;top:392px;width:1px;height:1px;background:#666;"></div><div style="left:223px;top:392px;width:1px;height:1px;background:#666;"></div><div style="left:226px;top:392px;width:1px;height:1px;background:#666;"></div><svg style="left:307px;top:388px" width="6" height="8" viewBox="0 0 6 8"><path d="M1 1 L4 4 L1 7" stroke="#000" stroke-width="1.6" fill="none"/></svg><svg style="left:307px;top:488px" width="6" height="8" viewBox="0 0 6 8"><path d="M1 1 L4 4 L1 7" stroke="#000" stroke-width="1.6" fill="none"/></svg><div style="left:310px;top:397px;width:1px;height:1px;background:#666;"></div><div style="left:310px;top:400px;width:1px;height:1px;background:#666;"></div><div style="left:310px;top:403px;width:1px;height:1px;background:#666;"></div><div style="left:310px;top:406px;width:1px;height:1px;background:#666;"></div><div style="left:310px;top:409px;width:1px;height:1px;background:#666;"></div><div style="left:310px;top:412px;width:1px;height:1px;background:#666;"></div><div style="left:310px;top:415px;width:1px;height:1px;background:#666;"></div><div style="left:310px;top:418px;width:1px;height:1px;background:#666;"></div><div style="left:310px;top:421px;width:1px;height:1px;background:#666;"></div><div style="left:310px;top:424px;width:1px;height:1px;background:#666;"></div><div style="left:310px;top:427px;width:1px;height:1px;background:#666;"></div><div style="left:310px;top:430px;width:1px;height:1px;background:#666;"></div><div style="left:310px;top:433px;width:1px;height:1px;background:#666;"></div><div style="left:310px;top:436px;width:1px;height:1px;background:#666;"></div><div style="left:310px;top:439px;width:1px;height:1px;background:#666;"></div><div style="left:310px;top:442px;width:1px;height:1px;background:#666;"></div><div style="left:310px;top:445px;width:1px;height:1px;background:#666;"></div><div style="left:310px;top:448px;width:1px;height:1px;background:#666;"></div><div style="left:310px;top:451px;width:1px;height:1px;background:#666;"></div><div style="left:310px;top:454px;width:1px;height:1px;background:#666;"></div><div style="left:310px;top:457px;width:1px;height:1px;background:#666;"></div><div style="left:310px;top:460px;width:1px;height:1px;background:#666;"></div><div style="left:310px;top:463px;width:1px;height:1px;background:#666;"></div><div style="left:310px;top:466px;width:1px;height:1px;background:#666;"></div><div style="left:310px;top:469px;width:1px;height:1px;background:#666;"></div><div style="left:310px;top:472px;width:1px;height:1px;background:#666;"></div><div style="left:310px;top:475px;width:1px;height:1px;background:#666;"></div><div style="left:310px;top:478px;width:1px;height:1px;background:#666;"></div><div style="left:310px;top:481px;width:1px;height:1px;background:#666;"></div><div style="left:310px;top:484px;width:1px;height:1px;background:#666;"></div><div style="left:314px;top:82px;width:1px;height:615px;background:#ffffff;"></div><div style="left:60px;top:398px;width:1px;height:403px;background:#ffffff;"></div><div style="left:62px;top:398px;width:44px;height:1px;background:#ffffff;"></div><div style="left:61px;top:399px;width:1px;height:20px;background:#ffffff;"></div><div style="left:62px;top:399px;width:1px;height:1px;background:#ffffff;"></div><div style="left:106px;top:398px;width:1px;height:21px;background:#8c8c8c;"></div><div class="t" style="left:66px;top:402px;font-size:12px;line-height:12px;color:#000;letter-spacing:0.407px;">Style</div><div style="left:107px;top:400px;width:50px;height:1px;background:#ffffff;"></div><div style="left:107px;top:400px;width:1px;height:18px;background:#ffffff;"></div><div style="left:157px;top:400px;width:1px;height:18px;background:#8c8c8c;"></div><div class="t" style="left:113px;top:404px;font-size:12px;line-height:12px;color:#000;letter-spacing:0.337px;">Guides</div><div style="left:158px;top:400px;width:57px;height:1px;background:#ffffff;"></div><div style="left:158px;top:400px;width:1px;height:18px;background:#ffffff;"></div><div style="left:215px;top:400px;width:1px;height:18px;background:#8c8c8c;"></div><div class="t" style="left:165px;top:404px;font-size:12px;line-height:12px;color:#000;letter-spacing:0.275px;">Clipping</div><div style="left:216px;top:400px;width:48px;height:1px;background:#ffffff;"></div><div style="left:216px;top:400px;width:1px;height:18px;background:#ffffff;"></div><div style="left:263px;top:400px;width:1px;height:18px;background:#8c8c8c;"></div><div class="t" style="left:223px;top:404px;font-size:12px;line-height:12px;color:#000;letter-spacing:0.36px;">Extras</div><div style="left:264px;top:398px;width:23px;height:1px;background:#ffffff;"></div><div style="left:286px;top:398px;width:1px;height:21px;background:#ffffff;"></div><div style="left:107px;top:418px;width:180px;height:1px;background:#ffffff;"></div><div style="left:64px;top:422px;width:220px;height:21px;background:#e8e8e8;"></div><div style="left:64px;top:422px;width:220px;height:1px;background:#ffffff;"></div><div style="left:64px;top:422px;width:1px;height:21px;background:#ffffff;"></div><div style="left:64px;top:442px;width:220px;height:1px;background:#8c8c8c;"></div><div style="left:283px;top:422px;width:1px;height:21px;background:#8c8c8c;"></div><div class="t" style="left:99.5px;top:426px;font-size:12px;line-height:12px;color:#18258f;letter-spacing:0.573px;">GLViewer [TGLSAViewer]</div><div class="t" style="left:65.5px;top:450px;font-size:12px;line-height:12px;color:#000;letter-spacing:0.332px;">Update behaviour</div><div style="left:171px;top:456px;width:32px;height:1px;background:#8c8c8c;"></div><div style="left:69px;top:467px;width:12px;height:12px;background:#fff;"></div><div style="left:69px;top:467px;width:12px;height:1px;background:#8c8c8c;"></div><div style="left:69px;top:467px;width:1px;height:12px;background:#8c8c8c;"></div><div style="left:70px;top:468px;width:10px;height:1px;background:#000;"></div><div style="left:70px;top:468px;width:1px;height:10px;background:#000;"></div><div style="left:70px;top:477px;width:10px;height:1px;background:#d0d0d0;"></div><div style="left:79px;top:468px;width:1px;height:10px;background:#d0d0d0;"></div><div style="left:69px;top:478px;width:12px;height:1px;background:#ffffff;"></div><div style="left:80px;top:467px;width:1px;height:12px;background:#ffffff;"></div><div class="t" style="left:88.4px;top:468px;font-size:12px;line-height:12px;color:#000;letter-spacing:0.237px;">Ignore sizes</div><div style="left:69px;top:485px;width:12px;height:12px;background:#fff;"></div><div style="left:69px;top:485px;width:12px;height:1px;background:#8c8c8c;"></div><div style="left:69px;top:485px;width:1px;height:12px;background:#8c8c8c;"></div><div style="left:70px;top:486px;width:10px;height:1px;background:#000;"></div><div style="left:70px;top:486px;width:1px;height:10px;background:#000;"></div><div style="left:70px;top:495px;width:10px;height:1px;background:#d0d0d0;"></div><div style="left:79px;top:486px;width:1px;height:10px;background:#d0d0d0;"></div><div style="left:69px;top:496px;width:12px;height:1px;background:#ffffff;"></div><div style="left:80px;top:485px;width:1px;height:12px;background:#ffffff;"></div><svg style="left:69px;top:485px" width="12" height="12" viewBox="0 0 12 12"><path d="M3.3 5.3 L5.5 8.9 L9.6 3.2" stroke="#000" stroke-width="2.0" fill="none" stroke-linecap="butt" stroke-linejoin="miter"/></svg><div class="t" style="left:88.4px;top:486px;font-size:12px;line-height:12px;color:#000;letter-spacing:0.348px;">Reset on update</div><div style="left:64px;top:509px;width:219px;height:21px;background:#e8e8e8;"></div><div style="left:64px;top:509px;width:219px;height:1px;background:#ffffff;"></div><div style="left:64px;top:509px;width:1px;height:21px;background:#ffffff;"></div><div style="left:64px;top:529px;width:219px;height:1px;background:#8c8c8c;"></div><div style="left:282px;top:509px;width:1px;height:21px;background:#8c8c8c;"></div><div class="t" style="left:133.3px;top:513px;font-size:12px;line-height:12px;color:#000;letter-spacing:0.361px;">Update Scene</div><div style="left:64px;top:532px;width:219px;height:21px;background:#e8e8e8;"></div><div style="left:64px;top:532px;width:219px;height:1px;background:#ffffff;"></div><div style="left:64px;top:532px;width:1px;height:21px;background:#ffffff;"></div><div style="left:64px;top:552px;width:219px;height:1px;background:#8c8c8c;"></div><div style="left:282px;top:532px;width:1px;height:21px;background:#8c8c8c;"></div><div class="t" style="left:133.3px;top:536px;font-size:12px;line-height:12px;color:#000;letter-spacing:0.197px;">Camera Home</div><div class="t" style="left:64.5px;top:564px;font-size:12px;line-height:12px;color:#000;letter-spacing:0.333px;">Max HQ draw time:</div><div style="left:186px;top:557px;width:49px;height:22px;background:#fff;"></div><div style="left:186px;top:557px;width:49px;height:1px;background:#8c8c8c;"></div><div style="left:186px;top:557px;width:1px;height:22px;background:#8c8c8c;"></div><div style="left:236px;top:557px;width:14px;height:11px;background:#e8e8e8;"></div><div style="left:236px;top:557px;width:14px;height:1px;background:#ffffff;"></div><div style="left:236px;top:557px;width:1px;height:11px;background:#ffffff;"></div><div style="left:236px;top:567px;width:14px;height:1px;background:#8c8c8c;"></div><div style="left:249px;top:557px;width:1px;height:11px;background:#8c8c8c;"></div><div style="left:236px;top:568px;width:14px;height:11px;background:#e8e8e8;"></div><div style="left:236px;top:568px;width:14px;height:1px;background:#ffffff;"></div><div style="left:236px;top:568px;width:1px;height:11px;background:#ffffff;"></div><div style="left:236px;top:578px;width:14px;height:1px;background:#8c8c8c;"></div><div style="left:249px;top:568px;width:1px;height:11px;background:#8c8c8c;"></div><svg style="left:239px;top:559px" width="8" height="5" viewBox="0 0 8 5"><path d="M0 5 L4.0 0 L8 5 Z" fill="#000"/></svg><svg style="left:239px;top:571px" width="8" height="5" viewBox="0 0 8 5"><path d="M0 0 L4.0 5 L8 0 Z" fill="#000"/></svg><div class="t" style="left:30.5px;width:200px;text-align:right;top:561px;font-size:12px;line-height:12px;color:#000;letter-spacing:0.104px;">5000</div><div class="t" style="left:64.5px;top:586px;font-size:12px;line-height:12px;color:#000;letter-spacing:0.333px;">Max LQ draw time:</div><div style="left:186px;top:579px;width:49px;height:21px;background:#fff;"></div><div style="left:186px;top:579px;width:49px;height:1px;background:#8c8c8c;"></div><div style="left:186px;top:579px;width:1px;height:21px;background:#8c8c8c;"></div><div style="left:236px;top:579px;width:14px;height:10px;background:#e8e8e8;"></div><div style="left:236px;top:579px;width:14px;height:1px;background:#ffffff;"></div><div style="left:236px;top:579px;width:1px;height:10px;background:#ffffff;"></div><div style="left:236px;top:588px;width:14px;height:1px;background:#8c8c8c;"></div><div style="left:249px;top:579px;width:1px;height:10px;background:#8c8c8c;"></div><div style="left:236px;top:589px;width:14px;height:11px;background:#e8e8e8;"></div><div style="left:236px;top:589px;width:14px;height:1px;background:#ffffff;"></div><div style="left:236px;top:589px;width:1px;height:11px;background:#ffffff;"></div><div style="left:236px;top:599px;width:14px;height:1px;background:#8c8c8c;"></div><div style="left:249px;top:589px;width:1px;height:11px;background:#8c8c8c;"></div><svg style="left:239px;top:581px" width="8" height="5" viewBox="0 0 8 5"><path d="M0 5 L4.0 0 L8 5 Z" fill="#000"/></svg><svg style="left:239px;top:592px" width="8" height="5" viewBox="0 0 8 5"><path d="M0 0 L4.0 5 L8 0 Z" fill="#000"/></svg><div class="t" style="left:30.5px;width:200px;text-align:right;top:583px;font-size:12px;line-height:12px;color:#000;letter-spacing:-0.258px;">100</div><div class="t" style="left:67px;top:614px;font-size:12px;line-height:12px;color:#000;letter-spacing:0.31px;">Clear Color</div><div style="left:139px;top:611px;width:22px;height:17px;background:#000;border:1px solid #6a6a6a"></div><div style="left:167px;top:610px;width:1px;height:18px;background:#8c8c8c;"></div><div style="left:168px;top:610px;width:1px;height:18px;background:#ffffff;"></div><svg style="left:171px;top:616px" width="6" height="3" viewBox="0 0 6 3"><path d="M0 0 L3.0 3 L6 0 Z" fill="#000"/></svg><div style="left:68px;top:641px;width:8px;height:1px;background:#8c8c8c;"></div><div style="left:160px;top:641px;width:122px;height:1px;background:#8c8c8c;"></div><div style="left:67px;top:641px;width:1px;height:76px;background:#8c8c8c;"></div><div style="left:281px;top:641px;width:1px;height:76px;background:#8c8c8c;"></div><div style="left:67px;top:716px;width:215px;height:1px;background:#8c8c8c;"></div><div style="left:68px;top:642px;width:8px;height:1px;background:#ffffff;"></div><div style="left:160px;top:642px;width:121px;height:1px;background:#ffffff;"></div><div style="left:68px;top:642px;width:1px;height:74px;background:#ffffff;"></div><div style="left:282px;top:641px;width:1px;height:77px;background:#ffffff;"></div><div style="left:67px;top:717px;width:216px;height:1px;background:#ffffff;"></div><div class="t" style="left:78.2px;top:635px;font-size:12px;line-height:12px;color:#000;letter-spacing:0.255px;">Light sources:</div><div style="left:81px;top:651px;width:12px;height:12px;background:#fff;"></div><div style="left:81px;top:651px;width:12px;height:1px;background:#8c8c8c;"></div><div style="left:81px;top:651px;width:1px;height:12px;background:#8c8c8c;"></div><div style="left:82px;top:652px;width:10px;height:1px;background:#000;"></div><div style="left:82px;top:652px;width:1px;height:10px;background:#000;"></div><div style="left:82px;top:661px;width:10px;height:1px;background:#d0d0d0;"></div><div style="left:91px;top:652px;width:1px;height:10px;background:#d0d0d0;"></div><div style="left:81px;top:662px;width:12px;height:1px;background:#ffffff;"></div><div style="left:92px;top:651px;width:1px;height:12px;background:#ffffff;"></div><svg style="left:81px;top:651px" width="12" height="12" viewBox="0 0 12 12"><path d="M3.3 5.3 L5.5 8.9 L9.6 3.2" stroke="#000" stroke-width="2.0" fill="none" stroke-linecap="butt" stroke-linejoin="miter"/></svg><div class="t" style="left:100.5px;top:652px;font-size:12px;line-height:12px;color:#000;letter-spacing:0.628px;">Top</div><div style="left:174px;top:651px;width:12px;height:12px;background:#fff;"></div><div style="left:174px;top:651px;width:12px;height:1px;background:#8c8c8c;"></div><div style="left:174px;top:651px;width:1px;height:12px;background:#8c8c8c;"></div><div style="left:175px;top:652px;width:10px;height:1px;background:#000;"></div><div style="left:175px;top:652px;width:1px;height:10px;background:#000;"></div><div style="left:175px;top:661px;width:10px;height:1px;background:#d0d0d0;"></div><div style="left:184px;top:652px;width:1px;height:10px;background:#d0d0d0;"></div><div style="left:174px;top:662px;width:12px;height:1px;background:#ffffff;"></div><div style="left:185px;top:651px;width:1px;height:12px;background:#ffffff;"></div><svg style="left:174px;top:651px" width="12" height="12" viewBox="0 0 12 12"><path d="M3.3 5.3 L5.5 8.9 L9.6 3.2" stroke="#000" stroke-width="2.0" fill="none" stroke-linecap="butt" stroke-linejoin="miter"/></svg><div class="t" style="left:193.2px;top:652px;font-size:12px;line-height:12px;color:#000;letter-spacing:0.5px;">Bottom</div><div style="left:81px;top:671px;width:12px;height:12px;background:#fff;"></div><div style="left:81px;top:671px;width:12px;height:1px;background:#8c8c8c;"></div><div style="left:81px;top:671px;width:1px;height:12px;background:#8c8c8c;"></div><div style="left:82px;top:672px;width:10px;height:1px;background:#000;"></div><div style="left:82px;top:672px;width:1px;height:10px;background:#000;"></div><div style="left:82px;top:681px;width:10px;height:1px;background:#d0d0d0;"></div><div style="left:91px;top:672px;width:1px;height:10px;background:#d0d0d0;"></div><div style="left:81px;top:682px;width:12px;height:1px;background:#ffffff;"></div><div style="left:92px;top:671px;width:1px;height:12px;background:#ffffff;"></div><svg style="left:81px;top:671px" width="12" height="12" viewBox="0 0 12 12"><path d="M3.3 5.3 L5.5 8.9 L9.6 3.2" stroke="#000" stroke-width="2.0" fill="none" stroke-linecap="butt" stroke-linejoin="miter"/></svg><div class="t" style="left:100.5px;top:672px;font-size:12px;line-height:12px;color:#000;letter-spacing:0.2px;">Left</div><div style="left:174px;top:671px;width:12px;height:12px;background:#fff;"></div><div style="left:174px;top:671px;width:12px;height:1px;background:#8c8c8c;"></div><div style="left:174px;top:671px;width:1px;height:12px;background:#8c8c8c;"></div><div style="left:175px;top:672px;width:10px;height:1px;background:#000;"></div><div style="left:175px;top:672px;width:1px;height:10px;background:#000;"></div><div style="left:175px;top:681px;width:10px;height:1px;background:#d0d0d0;"></div><div style="left:184px;top:672px;width:1px;height:10px;background:#d0d0d0;"></div><div style="left:174px;top:682px;width:12px;height:1px;background:#ffffff;"></div><div style="left:185px;top:671px;width:1px;height:12px;background:#ffffff;"></div><svg style="left:174px;top:671px" width="12" height="12" viewBox="0 0 12 12"><path d="M3.3 5.3 L5.5 8.9 L9.6 3.2" stroke="#000" stroke-width="2.0" fill="none" stroke-linecap="butt" stroke-linejoin="miter"/></svg><div class="t" style="left:193.2px;top:672px;font-size:12px;line-height:12px;color:#000;letter-spacing:0.296px;">Right</div><div style="left:81px;top:691px;width:12px;height:12px;background:#fff;"></div><div style="left:81px;top:691px;width:12px;height:1px;background:#8c8c8c;"></div><div style="left:81px;top:691px;width:1px;height:12px;background:#8c8c8c;"></div><div style="left:82px;top:692px;width:10px;height:1px;background:#000;"></div><div style="left:82px;top:692px;width:1px;height:10px;background:#000;"></div><div style="left:82px;top:701px;width:10px;height:1px;background:#d0d0d0;"></div><div style="left:91px;top:692px;width:1px;height:10px;background:#d0d0d0;"></div><div style="left:81px;top:702px;width:12px;height:1px;background:#ffffff;"></div><div style="left:92px;top:691px;width:1px;height:12px;background:#ffffff;"></div><svg style="left:81px;top:691px" width="12" height="12" viewBox="0 0 12 12"><path d="M3.3 5.3 L5.5 8.9 L9.6 3.2" stroke="#000" stroke-width="2.0" fill="none" stroke-linecap="butt" stroke-linejoin="miter"/></svg><div class="t" style="left:100.5px;top:692px;font-size:12px;line-height:12px;color:#000;letter-spacing:0.175px;">Front</div><div style="left:174px;top:691px;width:12px;height:12px;background:#fff;"></div><div style="left:174px;top:691px;width:12px;height:1px;background:#8c8c8c;"></div><div style="left:174px;top:691px;width:1px;height:12px;background:#8c8c8c;"></div><div style="left:175px;top:692px;width:10px;height:1px;background:#000;"></div><div style="left:175px;top:692px;width:1px;height:10px;background:#000;"></div><div style="left:175px;top:701px;width:10px;height:1px;background:#d0d0d0;"></div><div style="left:184px;top:692px;width:1px;height:10px;background:#d0d0d0;"></div><div style="left:174px;top:702px;width:12px;height:1px;background:#ffffff;"></div><div style="left:185px;top:691px;width:1px;height:12px;background:#ffffff;"></div><svg style="left:174px;top:691px" width="12" height="12" viewBox="0 0 12 12"><path d="M3.3 5.3 L5.5 8.9 L9.6 3.2" stroke="#000" stroke-width="2.0" fill="none" stroke-linecap="butt" stroke-linejoin="miter"/></svg><div class="t" style="left:193.2px;top:692px;font-size:12px;line-height:12px;color:#000;letter-spacing:0.377px;">Specular</div><div class="t" style="left:64.5px;top:733.5px;font-size:12px;line-height:12px;color:#000;letter-spacing:0.271px;">Point-size scale:</div><div style="left:182px;top:727px;width:35px;height:21px;background:#fff;"></div><div style="left:182px;top:727px;width:35px;height:1px;background:#8c8c8c;"></div><div style="left:182px;top:727px;width:1px;height:21px;background:#8c8c8c;"></div><div style="left:218px;top:727px;width:14px;height:10px;background:#e8e8e8;"></div><div style="left:218px;top:727px;width:14px;height:1px;background:#ffffff;"></div><div style="left:218px;top:727px;width:1px;height:10px;background:#ffffff;"></div><div style="left:218px;top:736px;width:14px;height:1px;background:#8c8c8c;"></div><div style="left:231px;top:727px;width:1px;height:10px;background:#8c8c8c;"></div><div style="left:218px;top:737px;width:14px;height:11px;background:#e8e8e8;"></div><div style="left:218px;top:737px;width:14px;height:1px;background:#ffffff;"></div><div style="left:218px;top:737px;width:1px;height:11px;background:#ffffff;"></div><div style="left:218px;top:747px;width:14px;height:1px;background:#8c8c8c;"></div><div style="left:231px;top:737px;width:1px;height:11px;background:#8c8c8c;"></div><svg style="left:221px;top:729px" width="8" height="5" viewBox="0 0 8 5"><path d="M0 5 L4.0 0 L8 5 Z" fill="#000"/></svg><svg style="left:221px;top:740px" width="8" height="5" viewBox="0 0 8 5"><path d="M0 0 L4.0 5 L8 0 Z" fill="#000"/></svg><div class="t" style="left:12.5px;width:200px;text-align:right;top:731.5px;font-size:12px;line-height:12px;color:#000;letter-spacing:0.164px;">1.0</div><div style="left:236px;top:730px;width:12px;height:12px;background:#fff;"></div><div style="left:236px;top:730px;width:12px;height:1px;background:#8c8c8c;"></div><div style="left:236px;top:730px;width:1px;height:12px;background:#8c8c8c;"></div><div style="left:237px;top:731px;width:10px;height:1px;background:#000;"></div><div style="left:237px;top:731px;width:1px;height:10px;background:#000;"></div><div style="left:237px;top:740px;width:10px;height:1px;background:#d0d0d0;"></div><div style="left:246px;top:731px;width:1px;height:10px;background:#d0d0d0;"></div><div style="left:236px;top:741px;width:12px;height:1px;background:#ffffff;"></div><div style="left:247px;top:730px;width:1px;height:12px;background:#ffffff;"></div><div class="t" style="left:64.5px;top:755.5px;font-size:12px;line-height:12px;color:#000;letter-spacing:0.27px;">Line-width scale:</div><div style="left:182px;top:749px;width:35px;height:21px;background:#fff;"></div><div style="left:182px;top:749px;width:35px;height:1px;background:#8c8c8c;"></div><div style="left:182px;top:749px;width:1px;height:21px;background:#8c8c8c;"></div><div style="left:218px;top:749px;width:14px;height:10px;background:#e8e8e8;"></div><div style="left:218px;top:749px;width:14px;height:1px;background:#ffffff;"></div><div style="left:218px;top:749px;width:1px;height:10px;background:#ffffff;"></div><div style="left:218px;top:758px;width:14px;height:1px;background:#8c8c8c;"></div><div style="left:231px;top:749px;width:1px;height:10px;background:#8c8c8c;"></div><div style="left:218px;top:759px;width:14px;height:11px;background:#e8e8e8;"></div><div style="left:218px;top:759px;width:14px;height:1px;background:#ffffff;"></div><div style="left:218px;top:759px;width:1px;height:11px;background:#ffffff;"></div><div style="left:218px;top:769px;width:14px;height:1px;background:#8c8c8c;"></div><div style="left:231px;top:759px;width:1px;height:11px;background:#8c8c8c;"></div><svg style="left:221px;top:751px" width="8" height="5" viewBox="0 0 8 5"><path d="M0 5 L4.0 0 L8 5 Z" fill="#000"/></svg><svg style="left:221px;top:762px" width="8" height="5" viewBox="0 0 8 5"><path d="M0 0 L4.0 5 L8 0 Z" fill="#000"/></svg><div class="t" style="left:12.5px;width:200px;text-align:right;top:753.5px;font-size:12px;line-height:12px;color:#000;letter-spacing:0.164px;">1.0</div><div style="left:236px;top:752px;width:12px;height:12px;background:#fff;"></div><div style="left:236px;top:752px;width:12px;height:1px;background:#8c8c8c;"></div><div style="left:236px;top:752px;width:1px;height:12px;background:#8c8c8c;"></div><div style="left:237px;top:753px;width:10px;height:1px;background:#000;"></div><div style="left:237px;top:753px;width:1px;height:10px;background:#000;"></div><div style="left:237px;top:762px;width:10px;height:1px;background:#d0d0d0;"></div><div style="left:246px;top:753px;width:1px;height:10px;background:#d0d0d0;"></div><div style="left:236px;top:763px;width:12px;height:1px;background:#ffffff;"></div><div style="left:247px;top:752px;width:1px;height:12px;background:#ffffff;"></div><div style="left:60px;top:771px;width:226px;height:11px;overflow:hidden"><div class="t" style="left:4.5px;top:7px;font-size:12px;line-height:12px;letter-spacing:0.26px">Wireframe line width:</div><div style="left:122px;top:0px;width:36px;height:21px;background:#fff;border-top:1px solid #8c8c8c;border-left:1px solid #8c8c8c"></div><div class="t" style="left:88px;width:64px;text-align:right;top:6px;font-size:12px;line-height:12px;letter-spacing:0.26px">1.0</div></div><div style="left:218px;top:771px;width:14px;height:11px;background:#e8e8e8;"></div><div style="left:218px;top:771px;width:14px;height:1px;background:#ffffff;"></div><div style="left:218px;top:771px;width:1px;height:11px;background:#ffffff;"></div><div style="left:218px;top:781px;width:14px;height:1px;background:#8c8c8c;"></div><div style="left:231px;top:771px;width:1px;height:11px;background:#8c8c8c;"></div><svg style="left:221px;top:773px" width="8" height="5" viewBox="0 0 8 5"><path d="M0 5 L4.0 0 L8 5 Z" fill="#000"/></svg><svg style="left:291px;top:404px" width="7" height="4" viewBox="0 0 7 4"><path d="M0 4 L3.5 0 L7 4 Z" fill="#000"/></svg><div style="left:287px;top:414px;width:16px;height:267px;background:#e8e8e8;"></div><div style="left:287px;top:414px;width:16px;height:1px;background:#ffffff;"></div><div style="left:287px;top:414px;width:1px;height:267px;background:#ffffff;"></div><div style="left:287px;top:680px;width:16px;height:1px;background:#8c8c8c;"></div><div style="left:302px;top:414px;width:1px;height:267px;background:#8c8c8c;"></div><div style="left:291px;top:545px;width:8px;height:1px;background:#8c8c8c;"></div><div style="left:291px;top:548px;width:8px;height:1px;background:#8c8c8c;"></div><div style="left:291px;top:551px;width:8px;height:1px;background:#8c8c8c;"></div><svg style="left:291px;top:772px" width="7" height="4" viewBox="0 0 7 4"><path d="M0 0 L3.5 4 L7 0 Z" fill="#000"/></svg><svg style="left:65px;top:786px" width="4" height="7" viewBox="0 0 4 7"><path d="M4 0 L0 3.5 L4 7 Z" fill="#000"/></svg><div style="left:76px;top:782px;width:194px;height:15px;background:#e8e8e8;"></div><div style="left:76px;top:782px;width:194px;height:1px;background:#ffffff;"></div><div style="left:76px;top:782px;width:1px;height:15px;background:#ffffff;"></div><div style="left:76px;top:796px;width:194px;height:1px;background:#8c8c8c;"></div><div style="left:269px;top:782px;width:1px;height:15px;background:#8c8c8c;"></div><div style="left:170px;top:786px;width:1px;height:8px;background:#8c8c8c;"></div><div style="left:173px;top:786px;width:1px;height:8px;background:#8c8c8c;"></div><div style="left:176px;top:786px;width:1px;height:8px;background:#8c8c8c;"></div><svg style="left:277px;top:786px" width="4" height="7" viewBox="0 0 4 7"><path d="M0 0 L4 3.5 L0 7 Z" fill="#000"/></svg><div style="left:58px;top:800px;width:248px;height:1px;background:#8c8c8c;"></div><div style="left:58px;top:803px;width:248px;height:1px;background:#8c8c8c;"></div><div style="left:378px;top:101px;width:700px;height:1px;background:#ffffff;"></div><div style="left:1077px;top:101px;width:1px;height:596px;background:#8c8c8c;"></div><div style="left:314px;top:696px;width:764px;height:1px;background:#8c8c8c;"></div><div style="left:316px;top:81px;width:61px;height:1px;background:#ffffff;"></div><div style="left:315px;top:82px;width:1px;height:1px;background:#ffffff;"></div><div style="left:377px;top:82px;width:1px;height:19px;background:#8c8c8c;"></div><div class="t" style="left:320.3px;top:85px;font-size:12px;line-height:12px;color:#000;letter-spacing:0.219px;">Viewer 1</div><div style="left:316px;top:103px;width:34px;height:21px;background:#e8e8e8;"></div><div style="left:316px;top:103px;width:34px;height:1px;background:#ffffff;"></div><div style="left:316px;top:103px;width:1px;height:21px;background:#ffffff;"></div><div style="left:316px;top:123px;width:34px;height:1px;background:#8c8c8c;"></div><div style="left:349px;top:103px;width:1px;height:21px;background:#8c8c8c;"></div><div class="t" style="left:320.7px;top:106.5px;font-size:12px;line-height:12px;color:#000;letter-spacing:-0.029px;">Hide</div><div style="left:350px;top:103px;width:676px;height:21px;background:#e8e8e8;"></div><div style="left:350px;top:103px;width:676px;height:1px;background:#ffffff;"></div><div style="left:350px;top:103px;width:1px;height:21px;background:#ffffff;"></div><div style="left:350px;top:123px;width:676px;height:1px;background:#8c8c8c;"></div><div style="left:1025px;top:103px;width:1px;height:21px;background:#8c8c8c;"></div><div class="t" style="left:663.7px;top:107px;font-size:12px;line-height:12px;color:#000;letter-spacing:0.162px;">Viewer 1</div><div style="left:1026px;top:103px;width:50px;height:21px;background:#e8e8e8;"></div><div style="left:1026px;top:103px;width:50px;height:1px;background:#ffffff;"></div><div style="left:1026px;top:103px;width:1px;height:21px;background:#ffffff;"></div><div style="left:1026px;top:123px;width:50px;height:1px;background:#8c8c8c;"></div><div style="left:1075px;top:103px;width:1px;height:21px;background:#8c8c8c;"></div><div class="t" style="left:1030px;top:107px;font-size:12px;line-height:12px;color:#000;letter-spacing:0.476px;">Actions</div><div style="left:316px;top:125px;width:760px;height:1px;background:#ffffff;"></div><div style="left:317px;top:126px;width:759px;height:2px;background:#7b9fc6;"></div><div style="left:316px;top:128px;width:760px;height:1px;background:#8c8c8c;"></div><div style="left:316px;top:129px;width:760px;height:1px;background:#ffffff;"></div><div style="left:316px;top:130px;width:760px;height:565px;background:#000;"></div><div style="left:316px;top:695px;width:761px;height:1px;background:#ffffff;"></div><div style="left:1076px;top:129px;width:1px;height:567px;background:#ffffff;"></div><svg style="left:643px;top:698px" width="8" height="6" viewBox="0 0 8 6"><path d="M1 1 L4 4 L7 1" stroke="#000" stroke-width="1.6" fill="none"/></svg><svg style="left:743px;top:698px" width="8" height="6" viewBox="0 0 8 6"><path d="M1 1 L4 4 L7 1" stroke="#000" stroke-width="1.6" fill="none"/></svg><div style="left:653px;top:701px;width:1px;height:1px;background:#666;"></div><div style="left:656px;top:701px;width:1px;height:1px;background:#666;"></div><div style="left:659px;top:701px;width:1px;height:1px;background:#666;"></div><div style="left:662px;top:701px;width:1px;height:1px;background:#666;"></div><div style="left:665px;top:701px;width:1px;height:1px;background:#666;"></div><div style="left:668px;top:701px;width:1px;height:1px;background:#666;"></div><div style="left:671px;top:701px;width:1px;height:1px;background:#666;"></div><div style="left:674px;top:701px;width:1px;height:1px;background:#666;"></div><div style="left:677px;top:701px;width:1px;height:1px;background:#666;"></div><div style="left:680px;top:701px;width:1px;height:1px;background:#666;"></div><div style="left:683px;top:701px;width:1px;height:1px;background:#666;"></div><div style="left:686px;top:701px;width:1px;height:1px;background:#666;"></div><div style="left:689px;top:701px;width:1px;height:1px;background:#666;"></div><div style="left:692px;top:701px;width:1px;height:1px;background:#666;"></div><div style="left:695px;top:701px;width:1px;height:1px;background:#666;"></div><div style="left:698px;top:701px;width:1px;height:1px;background:#666;"></div><div style="left:701px;top:701px;width:1px;height:1px;background:#666;"></div><div style="left:704px;top:701px;width:1px;height:1px;background:#666;"></div><div style="left:707px;top:701px;width:1px;height:1px;background:#666;"></div><div style="left:710px;top:701px;width:1px;height:1px;background:#666;"></div><div style="left:713px;top:701px;width:1px;height:1px;background:#666;"></div><div style="left:716px;top:701px;width:1px;height:1px;background:#666;"></div><div style="left:719px;top:701px;width:1px;height:1px;background:#666;"></div><div style="left:722px;top:701px;width:1px;height:1px;background:#666;"></div><div style="left:725px;top:701px;width:1px;height:1px;background:#666;"></div><div style="left:728px;top:701px;width:1px;height:1px;background:#666;"></div><div style="left:731px;top:701px;width:1px;height:1px;background:#666;"></div><div style="left:734px;top:701px;width:1px;height:1px;background:#666;"></div><div style="left:737px;top:701px;width:1px;height:1px;background:#666;"></div><div style="left:740px;top:701px;width:1px;height:1px;background:#666;"></div><div style="left:314px;top:706px;width:1px;height:95px;background:#ffffff;"></div><div style="left:316px;top:705px;width:68px;height:1px;background:#ffffff;"></div><div style="left:315px;top:706px;width:1px;height:1px;background:#ffffff;"></div><div style="left:384px;top:705px;width:1px;height:20px;background:#8c8c8c;"></div><div class="t" style="left:320.6px;top:709px;font-size:12px;line-height:12px;color:#000;letter-spacing:0.04px;">Command</div><div style="left:385px;top:725px;width:693px;height:1px;background:#ffffff;"></div><div style="left:1077px;top:725px;width:1px;height:76px;background:#8c8c8c;"></div><div style="left:314px;top:800px;width:764px;height:1px;background:#8c8c8c;"></div><div class="t" style="left:324.4px;top:734.5px;font-size:12px;line-height:12px;color:#000;letter-spacing:0.186px;">Command (local):</div><div style="left:433px;top:731px;width:636px;height:20px;background:#fff;"></div><div style="left:433px;top:731px;width:636px;height:1px;background:#8c8c8c;"></div><div style="left:433px;top:731px;width:1px;height:20px;background:#8c8c8c;"></div><div style="left:1051px;top:732px;width:16px;height:18px;background:#e8e8e8;"></div><div style="left:1051px;top:732px;width:16px;height:1px;background:#ffffff;"></div><div style="left:1051px;top:732px;width:1px;height:18px;background:#ffffff;"></div><div style="left:1051px;top:749px;width:16px;height:1px;background:#8c8c8c;"></div><div style="left:1066px;top:732px;width:1px;height:18px;background:#8c8c8c;"></div><div style="left:1051px;top:731px;width:16px;height:1px;background:#8c8c8c;"></div><svg style="left:1055px;top:739px" width="8" height="4" viewBox="0 0 8 4"><path d="M0 0 L4.0 4 L8 0 Z" fill="#000"/></svg><div style="left:319px;top:759px;width:754px;height:37px;background:#fff;"></div><div style="left:319px;top:759px;width:754px;height:1px;background:#8c8c8c;"></div><div style="left:319px;top:759px;width:1px;height:37px;background:#8c8c8c;"></div><div style="left:320px;top:760px;width:752px;height:2px;background:#e2e2e2;"></div><div style="left:320px;top:760px;width:2px;height:35px;background:#e2e2e2;"></div><div style="left:319px;top:795px;width:754px;height:1px;background:#ffffff;"></div><div style="left:1072px;top:759px;width:1px;height:37px;background:#ffffff;"></div><div style="left:56px;top:803px;width:336px;height:1px;background:#8c8c8c;"></div><div style="left:56px;top:803px;width:1px;height:19px;background:#8c8c8c;"></div><div style="left:391px;top:803px;width:1px;height:19px;background:#ffffff;"></div><div style="left:56px;top:821px;width:336px;height:1px;background:#ffffff;"></div><div style="left:393px;top:803px;width:101px;height:1px;background:#8c8c8c;"></div><div style="left:393px;top:803px;width:1px;height:19px;background:#8c8c8c;"></div><div style="left:493px;top:803px;width:1px;height:19px;background:#ffffff;"></div><div style="left:393px;top:821px;width:101px;height:1px;background:#ffffff;"></div><div style="left:495px;top:803px;width:102px;height:1px;background:#8c8c8c;"></div><div style="left:495px;top:803px;width:1px;height:19px;background:#8c8c8c;"></div><div style="left:596px;top:803px;width:1px;height:19px;background:#ffffff;"></div><div style="left:495px;top:821px;width:102px;height:1px;background:#ffffff;"></div><div style="left:598px;top:803px;width:482px;height:1px;background:#8c8c8c;"></div><div style="left:598px;top:803px;width:1px;height:19px;background:#8c8c8c;"></div><div style="left:1079px;top:803px;width:1px;height:19px;background:#ffffff;"></div><div style="left:598px;top:821px;width:482px;height:1px;background:#ffffff;"></div><svg style="left:1056px;top:800px" width="24" height="22" viewBox="0 0 24 22"><path d="M11 20.6 L23 8.6 M15 20.6 L23 12.6 M19 20.6 L23 16.6" stroke="#fff" stroke-width="1.4"/><path d="M12.4 20.8 L22.6 10.6 M16.4 20.8 L22.6 14.6 M20.4 20.8 L22.6 18.6" stroke="#858585" stroke-width="1.5" stroke-linecap="round"/></svg></div>
<svg style="position:absolute;left:0;top:0" width="1136" height="902" viewBox="0 0 1136 902" shape-rendering="crispEdges">
<defs><clipPath id="gl"><rect x="316" y="130" width="760" height="565"/></clipPath><linearGradient id="wingG" x1="345" y1="247" x2="560" y2="400" gradientUnits="userSpaceOnUse"><stop offset="0" stop-color="#ababab"/><stop offset="0.6" stop-color="#a5a5a5"/><stop offset="1" stop-color="#a8a8a8"/></linearGradient><linearGradient id="bodyG" x1="600" y1="0" x2="975" y2="0" gradientUnits="userSpaceOnUse"><stop offset="0" stop-color="#a3a3a3"/><stop offset="0.5" stop-color="#a8a8a8"/><stop offset="0.8" stop-color="#b0b0b0"/><stop offset="1" stop-color="#bdbdbd"/></linearGradient><linearGradient id="e2" x1="0" y1="422" x2="0" y2="484" gradientUnits="userSpaceOnUse"><stop offset="0" stop-color="#505050"/><stop offset="0.3" stop-color="#3a3a3a"/><stop offset="0.7" stop-color="#393939"/><stop offset="1" stop-color="#555"/></linearGradient><linearGradient id="e3" x1="0" y1="455" x2="0" y2="527" gradientUnits="userSpaceOnUse"><stop offset="0" stop-color="#505050"/><stop offset="0.3" stop-color="#3a3a3a"/><stop offset="0.7" stop-color="#393939"/><stop offset="1" stop-color="#555"/></linearGradient></defs><g clip-path="url(#gl)">
<polygon points="552,360 595,363 624,363 625,362 736.6,360.2 740.3,361.4 744.6,363.2 747.7,366.6 749,370 758,370.3 770,371.6 780,372.5 790,373 820,376.7 874,384 900,385 912.4,386.2 919.4,389.3 925.6,394.8 932.6,396.7 946.6,400.2 958.2,404.1 967.5,409.5 973,415 975,418.8 975,425.8 970,432 950,445 920,461 890,476 860,489 833,498 775,515.2 706,535.6 650,548 621,545 603,526 613,514 613,480 605,459 591,455 591,431 552,415 527,396" fill="url(#bodyG)" />
<polygon points="527,396 560,372 693,401 612,405 550,408" fill="#8b8b8b" />
<polygon points="560,394 612,398 612,405 550,408" fill="#979797" />
<line x1="558" y1="377" x2="693" y2="400.5" stroke="#d4d4d4" stroke-width="1.4" shape-rendering="auto"/>
<polygon points="550,408 612,405 598,420 591,431 552,415" fill="#a2a2a2" />
<polygon points="660,372.5 736,368.5 748,368.5 749,374 700,374.5" fill="#8a8a8a" />
<polygon points="690,367 736,366 746,366 748,368.5 700,368.5" fill="#9f9f9f" />
<polygon points="715,408 773,406 773,407.5 715,409.5" fill="#8e8e8e" />
<polygon points="715,406 925.6,404.8 936.5,416.5 900,415 820,411 715,408.5" fill="#878787" />
<polygon points="925.6,404.8 929.5,404.8 940.4,415.7 936.5,416.5" fill="#9c9c9c" />
<polygon points="700,432 807,430 815,445 820,463 678,482 660,470" fill="#a7a7a7" />
<polygon points="678,482 820,463 821,474 706,482" fill="#8e8e8e" />
<path d="M807 430 Q816 445 819 463" stroke="#d8d8d8" stroke-width="1.6" fill="none" shape-rendering="auto"/>
<polygon points="630,509 717,499 717,513 630,527" fill="#a3a3a3" />
<polygon points="630,527 717,513 833,485 860,475.4 890,465.4 920,453 950,439 970,430 972,431 970,431.5 950,443 920,458.4 890,472 860,482.4 833,494 717,524 632,538.7" fill="#8d8d8d" />
<polygon points="632,538.7 717,524 833,494 860,482.4 890,472 920,458.4 950,443 970,431.5 970,432 950,445 920,461 890,476 860,489 833,498 775,515.2 706,535.6 650,548" fill="#b6b6b6" />
<defs><linearGradient id="eg3" x1="560" y1="448" x2="567.56" y2="532" gradientUnits="userSpaceOnUse"><stop offset="0.000" stop-color="#565656"/><stop offset="0.167" stop-color="#565656"/><stop offset="0.167" stop-color="#4a4a4a"/><stop offset="0.286" stop-color="#4a4a4a"/><stop offset="0.286" stop-color="#424242"/><stop offset="0.405" stop-color="#424242"/><stop offset="0.405" stop-color="#3a3a3a"/><stop offset="0.619" stop-color="#3a3a3a"/><stop offset="0.619" stop-color="#3b3b3b"/><stop offset="0.702" stop-color="#3b3b3b"/><stop offset="0.702" stop-color="#363636"/><stop offset="0.786" stop-color="#363636"/><stop offset="0.786" stop-color="#414141"/><stop offset="0.857" stop-color="#414141"/><stop offset="0.857" stop-color="#4b4b4b"/><stop offset="1.000" stop-color="#4b4b4b"/></linearGradient><linearGradient id="eg2" x1="540" y1="415" x2="547.56" y2="499" gradientUnits="userSpaceOnUse"><stop offset="0.000" stop-color="#565656"/><stop offset="0.167" stop-color="#565656"/><stop offset="0.167" stop-color="#4a4a4a"/><stop offset="0.286" stop-color="#4a4a4a"/><stop offset="0.286" stop-color="#424242"/><stop offset="0.405" stop-color="#424242"/><stop offset="0.405" stop-color="#3a3a3a"/><stop offset="0.619" stop-color="#3a3a3a"/><stop offset="0.619" stop-color="#3b3b3b"/><stop offset="0.702" stop-color="#3b3b3b"/><stop offset="0.702" stop-color="#363636"/><stop offset="0.786" stop-color="#363636"/><stop offset="0.786" stop-color="#414141"/><stop offset="0.857" stop-color="#414141"/><stop offset="0.857" stop-color="#4b4b4b"/><stop offset="1.000" stop-color="#4b4b4b"/></linearGradient><linearGradient id="eg1" x1="520" y1="405" x2="524.5" y2="455" gradientUnits="userSpaceOnUse"><stop offset="0.000" stop-color="#4a4a4a"/><stop offset="0.220" stop-color="#4a4a4a"/><stop offset="0.220" stop-color="#404040"/><stop offset="0.460" stop-color="#404040"/><stop offset="0.460" stop-color="#393939"/><stop offset="0.620" stop-color="#393939"/><stop offset="0.620" stop-color="#363636"/><stop offset="0.740" stop-color="#363636"/><stop offset="0.740" stop-color="#414141"/><stop offset="0.840" stop-color="#414141"/><stop offset="0.840" stop-color="#4b4b4b"/><stop offset="1.000" stop-color="#4b4b4b"/></linearGradient></defs>
<polygon points="476,419 489,416 527,396 549,407 552,415 572,421 588,424 572,430 543,433 516,440 494,449 484,447 479,443" fill="url(#eg1)" />
<polygon points="476,419 483,418 485,445 479,443" fill="#4e4e4e" />
<polygon points="489,421.5 551,416 551,422.5 489,428" fill="#c0c0c0" />
<polygon points="494,441 500,436 520,430 542,425 572,422 590,426 592,452 591,456 562,463 513,481 507,483 499,478 494,468" fill="url(#eg2)" />
<polygon points="494,441 500,436 506,434 505,480 499,478 494,468" fill="#4c4c4c" />
<polygon points="574,422 590,426 592,452 591,456 576,459" fill="#474747" />
<polygon points="506,457 576,449 576,456.5 506,464" fill="#c0c0c0" />
<polygon points="542,426 550,418.5 562,422 546,430" fill="#2c2c2c" />
<polygon points="510,484 516,478 540,470 562,463 591,455 606,462 611,470 613.6,490 613.6,512 610,520 597,526 540,526 524,522 514,517 510,505" fill="url(#eg3)" />
<polygon points="510,484 516,478 524,476 524,522 514,517 510,505" fill="#4a4a4a" />
<polygon points="597,456 606,462 611,470 613.6,490 613.6,512 610,520 597,526" fill="#454545" />
<polygon points="524,493 598,487 598,495 524,501" fill="#c0c0c0" />
<polygon points="562,465 570,455.5 582,459 566,469" fill="#2c2c2c" />
<polygon points="567,526 576,535 600,525" fill="#3a3a3a" />
<polygon points="344,247.5 372,242 381,242 595,363 560,371 489,416 470,418 457,420 470,400 484,379 482,374 470,362 450,346 409,312.3 411,311.3" fill="url(#wingG)" />
<polygon points="482,374 540,368 552,360 560,371 489,416 470,418 484,379" fill="#a9a9a9" />
<line x1="489.5" y1="416.5" x2="560" y2="371" stroke="#e2e2e2" stroke-width="2.2" shape-rendering="auto"/>
<line x1="552" y1="360" x2="560" y2="371" stroke="#e2e2e2" stroke-width="1.3" shape-rendering="auto"/>
<polygon points="513,341 534,340 524,344" fill="#8a8a8a" />
<polygon points="487.4,610 549.7,560.2 621.6,545.4 708.2,522 708,526 540,584.7" fill="#b7b7b7" />
<polygon points="487.4,610 540,584.7 708,526 708.5,529.3 540,594.2" fill="#adadad" />
<polygon points="487.4,610 540,594.2 708.5,529.3 710.3,530.5 543.4,603.5" fill="#a3a3a3" />
<polygon points="487.4,610 543.4,600.5 543.4,604 490,610" fill="#999999" />
<polygon points="676,536 706,521 710,524 684,535" fill="#d6d6d6" shape-rendering="auto"/>
</g></svg>
</body></html>
